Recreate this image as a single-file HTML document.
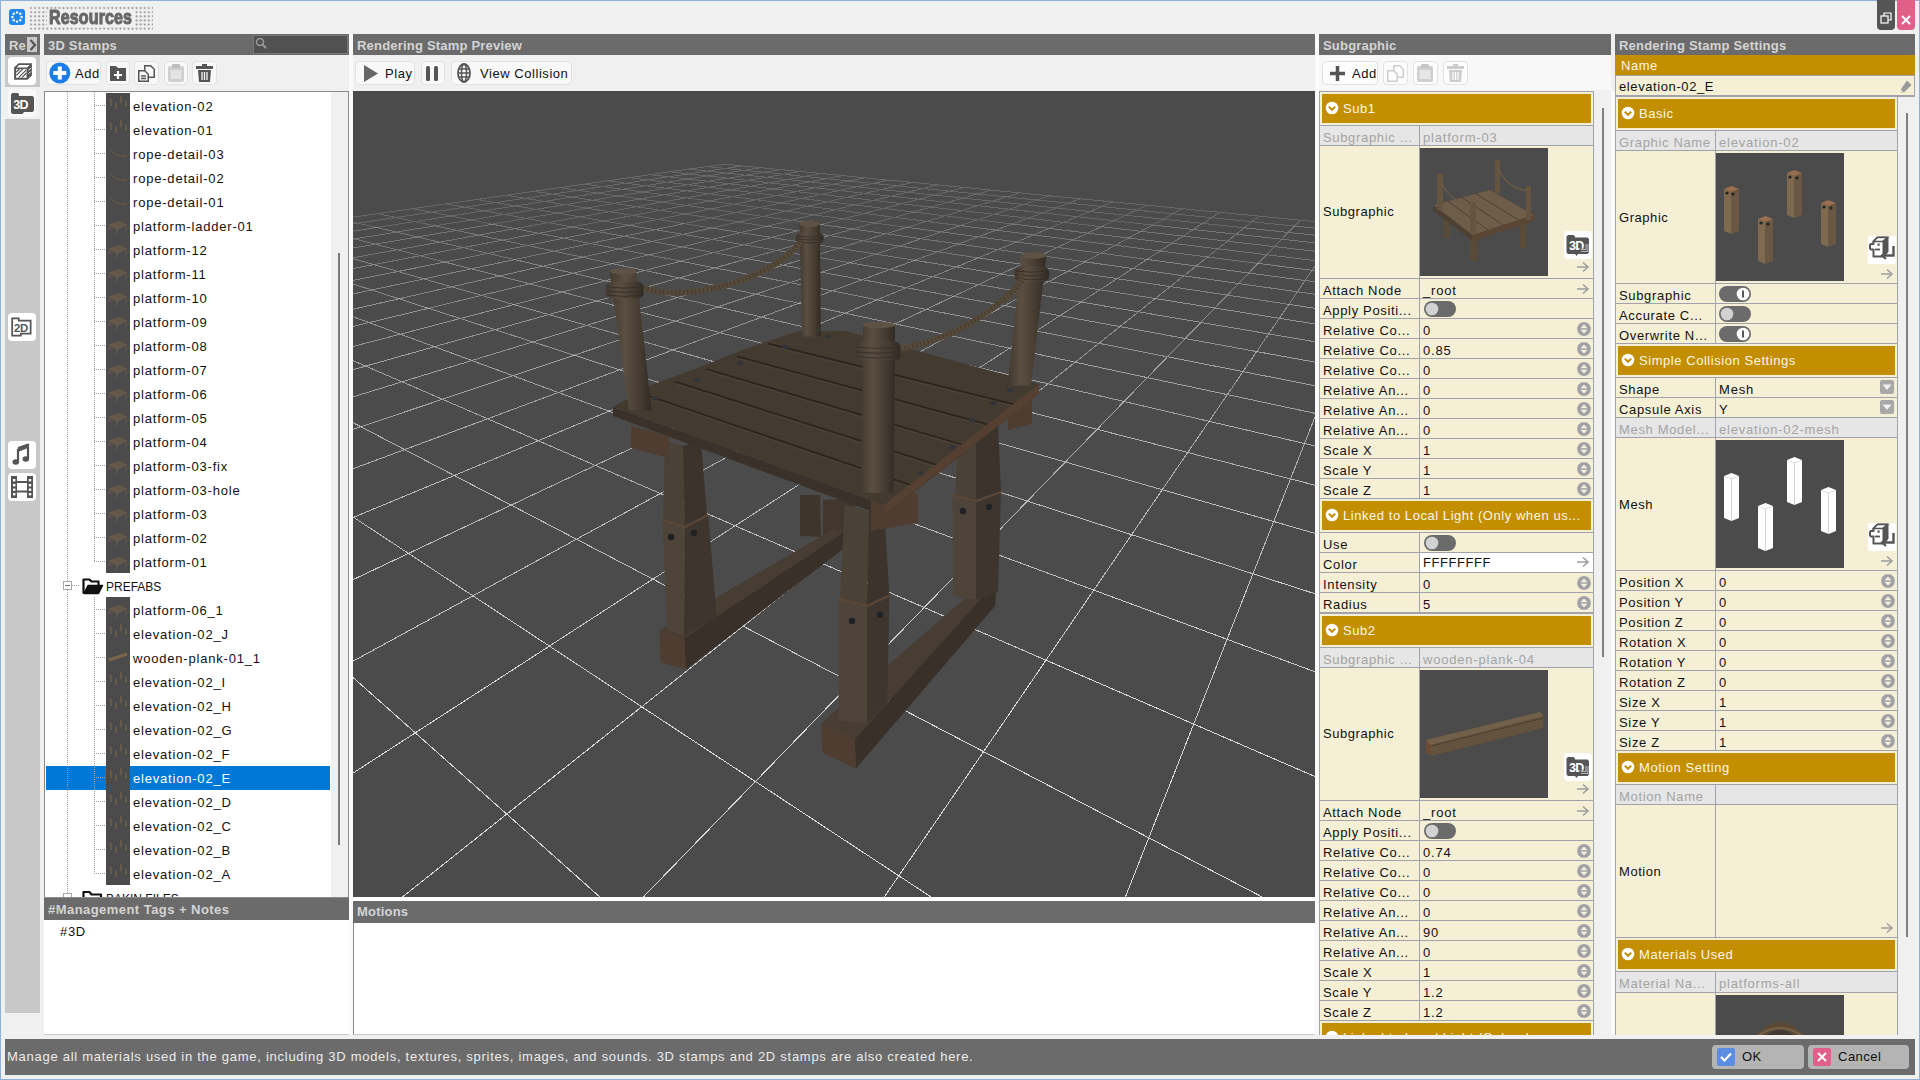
<!DOCTYPE html><html><head><meta charset="utf-8"><style>
html,body{margin:0;padding:0;width:1920px;height:1080px;overflow:hidden;}
body{position:relative;font-family:"Liberation Sans",sans-serif;}
div,svg{position:absolute;box-sizing:border-box;}
.a{position:absolute;}
.t{white-space:nowrap;}
</style></head><body>
<div style="left:0px;top:0px;width:1920px;height:1080px;background:#f0f0f0;"></div>
<div style="left:0px;top:0px;width:1920px;height:1px;background:#8fb0d8;"></div>
<div style="left:0px;top:0px;width:1px;height:1080px;background:#8fb0d8;"></div>
<div style="left:1919px;top:0px;width:1px;height:1080px;background:#8fb0d8;"></div>
<div style="left:0px;top:1079px;width:1920px;height:1px;background:#8fb0d8;"></div>
<svg class="a" style="left:9px;top:9px" width="16" height="16" viewBox="0 0 16 16"><rect x="0" y="0" width="16" height="16" rx="3" fill="#1e88f0"/><circle cx="12.6" cy="8.0" r="1.2" fill="#fff"/><circle cx="11.253986038169119" cy="11.251395833084683" r="1.2" fill="#fff"/><circle cx="8.003663102869373" cy="12.599998541486439" r="1.2" fill="#fff"/><circle cx="4.751196433827976" cy="11.256574179782788" r="1.2" fill="#fff"/><circle cx="3.400005834053319" cy="8.00732620341584" r="1.2" fill="#fff"/><circle cx="4.740839743715545" cy="4.753790760925007" r="1.2" fill="#fff"/><circle cx="7.9890107006835045" cy="3.4000131266164972" r="1.2" fill="#fff"/><circle cx="11.243612853438744" cy="4.7382557339658025" r="1.2" fill="#fff"/></svg>
<div class="a" style="left:29px;top:6px;width:124px;height:24px;background-image:radial-gradient(circle at 2px 2px,#a4a4a4 0.95px,transparent 1.2px);background-size:4.07px 4.15px;"></div>
<div class="a" style="left:47px;top:11px;width:88px;height:15px;background:#f0f0f0;"></div>
<div class="t" style="left:49px;top:6px;height:20px;line-height:20px;font-size:16px;color:#676767;font-weight:bold;letter-spacing:0.15px;transform:scale(1.0,1.22);transform-origin:0 0;-webkit-text-stroke:0.9px #676767;">Resources</div>
<div style="left:1877px;top:0px;width:18px;height:30px;background:#555;border-radius:0 0 4px 4px;"></div>
<svg class="a" style="left:1880px;top:12px" width="12" height="12"><rect x="1" y="4" width="7" height="7" fill="none" stroke="#fff" stroke-width="1.2"/><path d="M4 4V1h7v7H8" fill="none" stroke="#fff" stroke-width="1.2"/></svg>
<div style="left:1897px;top:0px;width:18px;height:30px;background:#e0608a;border-radius:0 0 4px 4px;"></div>
<svg class="a" style="left:1901px;top:15px" width="10" height="10"><path d="M1 1L9 9M9 1L1 9" stroke="#fff" stroke-width="2"/></svg>
<div style="left:349px;top:34px;width:4px;height:1001px;background:#fafafa;"></div>
<div style="left:1315px;top:34px;width:4px;height:1001px;background:#fafafa;"></div>
<div style="left:5px;top:34px;width:35px;height:21px;background:#6b6b6b;"></div>
<div class="t" style="left:9px;top:36px;height:20px;line-height:20px;font-size:13px;color:#d4d4d4;font-weight:bold;letter-spacing:0.2px;">Re</div>
<div style="left:27px;top:37px;width:10px;height:15px;background:#c8c8c8;"></div>
<svg class="a" style="left:28px;top:38px" width="9" height="14"><path d="M2.5 2L7 7L2.5 12" fill="none" stroke="#555" stroke-width="2.2"/></svg>
<div style="left:44px;top:34px;width:305px;height:21px;background:#6b6b6b;"></div>
<div class="t" style="left:48px;top:36px;height:20px;line-height:20px;font-size:13px;color:#d4d4d4;font-weight:bold;letter-spacing:0.2px;">3D Stamps</div>
<div style="left:253px;top:35px;width:95px;height:19px;background:#515151;border:1px solid #777;box-sizing:border-box;"></div>
<svg class="a" style="left:255px;top:37px" width="12" height="12"><circle cx="5" cy="5" r="3.5" fill="none" stroke="#9a9a9a" stroke-width="1.6"/><path d="M7.5 7.5L11 11" stroke="#9a9a9a" stroke-width="2"/></svg>
<div style="left:353px;top:34px;width:962px;height:21px;background:#6b6b6b;"></div>
<div class="t" style="left:357px;top:36px;height:20px;line-height:20px;font-size:13px;color:#d4d4d4;font-weight:bold;letter-spacing:0.2px;">Rendering Stamp Preview</div>
<div style="left:1319px;top:34px;width:292px;height:21px;background:#6b6b6b;"></div>
<div class="t" style="left:1323px;top:36px;height:20px;line-height:20px;font-size:13px;color:#d4d4d4;font-weight:bold;letter-spacing:0.2px;">Subgraphic</div>
<div style="left:1615px;top:34px;width:300px;height:21px;background:#6b6b6b;"></div>
<div class="t" style="left:1619px;top:36px;height:20px;line-height:20px;font-size:13px;color:#d4d4d4;font-weight:bold;letter-spacing:0.2px;">Rendering Stamp Settings</div>
<div style="left:5px;top:55px;width:35px;height:32px;background:#c8c8c8;"></div>
<div style="left:8px;top:57px;width:28px;height:28px;background:#fff;border-radius:4px;"></div>
<div style="left:8px;top:89px;width:28px;height:28px;background:#f8f8f8;border-radius:4px;"></div>
<div style="left:5px;top:119px;width:35px;height:894px;background:#c8c8c8;"></div>
<div style="left:8px;top:313px;width:28px;height:28px;background:#fff;border-radius:4px;"></div>
<div style="left:8px;top:441px;width:28px;height:28px;background:#fff;border-radius:4px;"></div>
<div style="left:8px;top:473px;width:28px;height:28px;background:#fff;border-radius:4px;"></div>
<div style="left:44px;top:91px;width:305px;height:807px;background:#fff;border:1px solid #8a8a8a;box-sizing:border-box;"></div>
<div style="left:331px;top:92px;width:17px;height:805px;background:#f0f0f0;"></div>
<div style="left:338px;top:253px;width:2px;height:592px;background:#7a7a7a;"></div>
<div style="left:5px;top:1039px;width:1910px;height:36px;background:#6b6b6b;"></div>
<div class="t" style="left:7px;top:1047px;height:20px;line-height:20px;font-size:13px;color:#ececec;font-weight:normal;letter-spacing:0.73px;">Manage all materials used in the game, including 3D models, textures, sprites, images, and sounds. 3D stamps and 2D stamps are also created here.</div>
<div style="left:1712px;top:1045px;width:92px;height:24px;background:#b4b4b4;border-radius:4px;"></div>
<div style="left:1717px;top:1048px;width:18px;height:18px;background:#5b8ee0;border-radius:2px;"></div>
<svg class="a" style="left:1719px;top:1051px" width="14" height="12"><path d="M2 6L5.5 9.5L12 2.5" fill="none" stroke="#fff" stroke-width="2.2"/></svg>
<div class="t" style="left:1742px;top:1047px;height:20px;line-height:20px;font-size:13px;color:#111;font-weight:normal;letter-spacing:0.5px;">OK</div>
<div style="left:1808px;top:1045px;width:101px;height:24px;background:#b4b4b4;border-radius:4px;"></div>
<div style="left:1813px;top:1048px;width:18px;height:18px;background:#e0608a;border-radius:2px;"></div>
<svg class="a" style="left:1816px;top:1051px" width="12" height="12"><path d="M2 2L10 10M10 2L2 10" stroke="#fff" stroke-width="2"/></svg>
<div class="t" style="left:1838px;top:1047px;height:20px;line-height:20px;font-size:13px;color:#111;font-weight:normal;letter-spacing:0.5px;">Cancel</div>
<svg class="a" style="left:353px;top:91px" width="962" height="806" viewBox="353 91 962 806"><rect x="353" y="91" width="962" height="806" fill="#4b4b4b"/><path shape-rendering="crispEdges" stroke="#d8d8d8" stroke-opacity="0.2" stroke-width="1.0" fill="none" d="M724.0 164.1L706.8 166.6M706.8 166.6L688.8 169.1M688.8 169.1L669.9 171.8M669.9 171.8L650.0 174.7M650.0 174.7L629.2 177.7M629.2 177.7L607.2 180.8M607.2 180.8L584.0 184.1M584.0 184.1L559.5 187.6M559.5 187.6L533.6 191.3M533.6 191.3L506.1 195.3M506.1 195.3L477.0 199.4M477.0 199.4L446.0 203.9M446.0 203.9L413.0 208.6M413.0 208.6L377.8 213.6M377.8 213.6L351.0 217.5M742.1 165.9L725.0 168.4M725.0 168.4L707.1 171.1M707.1 171.1L688.4 173.9M688.4 173.9L668.6 176.8M668.6 176.8L647.8 179.9M647.8 179.9L625.9 183.2M625.9 183.2L602.8 186.6M602.8 186.6L578.3 190.3M578.3 190.3L552.4 194.2M552.4 194.2L524.9 198.3M524.9 198.3L495.7 202.6M495.7 202.6L464.6 207.2M464.6 207.2L431.4 212.2M431.4 212.2L395.9 217.5M395.9 217.5L357.9 223.2M357.9 223.2L351.0 224.2M760.8 167.7L743.9 170.3M743.9 170.3L726.2 173.1M726.2 173.1L707.5 176.0M707.5 176.0L687.9 179.0M687.9 179.0L667.2 182.3M667.2 182.3L645.4 185.7M645.4 185.7L622.4 189.3M622.4 189.3L597.9 193.1M597.9 193.1L572.0 197.1M572.0 197.1L544.6 201.4M544.6 201.4L515.3 205.9M515.3 205.9L484.1 210.8M484.1 210.8L450.7 216.0M450.7 216.0L415.0 221.6M415.0 221.6L376.7 227.5M780.2 169.6L763.5 172.3M763.5 172.3L745.9 175.2M745.9 175.2L727.4 178.2M727.4 178.2L708.0 181.3M708.0 181.3L687.4 184.7M687.4 184.7L665.7 188.2M665.7 188.2L642.8 192.0M642.8 192.0L618.4 196.0M618.4 196.0L592.6 200.2M592.6 200.2L565.1 204.6M565.1 204.6L535.8 209.4M535.8 209.4L504.5 214.5M504.5 214.5L471.1 220.0M471.1 220.0L435.1 225.8M800.3 171.5L783.8 174.3M783.8 174.3L766.4 177.3M766.4 177.3L748.1 180.4M748.1 180.4L728.8 183.8M728.8 183.8L708.4 187.2M708.4 187.2L686.9 190.9M686.9 190.9L664.0 194.8M664.0 194.8L639.8 199.0M639.8 199.0L614.1 203.4M614.1 203.4L586.6 208.1M586.6 208.1L557.3 213.1M557.3 213.1L526.0 218.4M526.0 218.4L492.4 224.2M821.1 173.5L804.8 176.5M804.8 176.5L787.7 179.6M787.7 179.6L769.6 182.8M769.6 182.8L750.5 186.2M750.5 186.2L730.3 189.9M730.3 189.9L708.9 193.7M708.9 193.7L686.3 197.8M686.3 197.8L662.2 202.1M662.2 202.1L636.5 206.7M636.5 206.7L609.2 211.7M609.2 211.7L580.0 216.9M580.0 216.9L548.6 222.6M548.6 222.6L515.0 228.6M842.7 175.6L826.7 178.7M826.7 178.7L809.8 181.9M809.8 181.9L791.9 185.3M791.9 185.3L773.1 188.9M773.1 188.9L753.1 192.6M753.1 192.6L732.0 196.6M732.0 196.6L709.5 200.9M709.5 200.9L685.6 205.4M685.6 205.4L660.1 210.3M660.1 210.3L632.9 215.4M632.9 215.4L603.7 221.0M603.7 221.0L572.4 226.9M865.1 177.8L849.4 181.0M849.4 181.0L832.7 184.3M832.7 184.3L815.2 187.8M815.2 187.8L796.6 191.6M796.6 191.6L776.9 195.5M776.9 195.5L756.0 199.7M756.0 199.7L733.8 204.2M733.8 204.2L710.1 208.9M710.1 208.9L684.9 214.0M684.9 214.0L657.8 219.4M657.8 219.4L628.8 225.2M888.4 180.1L873.0 183.4M873.0 183.4L856.7 186.8M856.7 186.8L839.4 190.5M839.4 190.5L821.2 194.4M821.2 194.4L801.8 198.5M801.8 198.5L781.2 202.9M781.2 202.9L759.3 207.6M759.3 207.6L735.9 212.5M735.9 212.5L710.8 217.9M710.8 217.9L684.0 223.6M912.6 182.4L897.5 185.9M897.5 185.9L881.6 189.5M881.6 189.5L864.7 193.3M864.7 193.3L846.8 197.3M846.8 197.3L827.8 201.7M827.8 201.7L807.6 206.2M807.6 206.2L786.0 211.1M786.0 211.1L762.9 216.4M762.9 216.4L738.2 222.0M738.2 222.0L711.6 228.0M937.8 184.9L923.1 188.5M923.1 188.5L907.5 192.2M907.5 192.2L891.1 196.2M891.1 196.2L873.6 200.4M873.6 200.4L855.0 204.9M855.0 204.9L835.2 209.7M835.2 209.7L814.0 214.9M814.0 214.9L791.3 220.4M791.3 220.4L767.0 226.3M963.9 187.4L949.7 191.2M949.7 191.2L934.6 195.1M934.6 195.1L918.6 199.2M918.6 199.2L901.6 203.7M901.6 203.7L883.5 208.4M883.5 208.4L864.1 213.4M864.1 213.4L843.4 218.8M843.4 218.8L821.2 224.6M991.2 190.1L977.5 194.0M977.5 194.0L962.9 198.1M962.9 198.1L947.5 202.4M947.5 202.4L931.0 207.1M931.0 207.1L913.4 212.0M913.4 212.0L894.6 217.3M894.6 217.3L874.4 223.0M874.4 223.0L852.8 229.0M1019.7 192.9L1006.5 196.9M1006.5 196.9L992.5 201.2M992.5 201.2L977.6 205.7M977.6 205.7L961.8 210.6M961.8 210.6L944.8 215.8M944.8 215.8L926.6 221.4M926.6 221.4L907.1 227.3M1049.4 195.8L1036.8 200.0M1036.8 200.0L1023.5 204.5M1023.5 204.5L1009.3 209.2M1009.3 209.2L994.1 214.3M994.1 214.3L977.8 219.8M977.8 219.8L960.3 225.6M1080.4 198.8L1068.5 203.2M1068.5 203.2L1055.9 207.9M1055.9 207.9L1042.4 212.9M1042.4 212.9L1028.0 218.2M1028.0 218.2L1012.5 224.0M1112.8 201.9L1101.8 206.5M1101.8 206.5L1089.9 211.5M1089.9 211.5L1077.3 216.7M1077.3 216.7L1063.7 222.3M1063.7 222.3L1049.1 228.4M1146.8 205.2L1136.6 210.1M1136.6 210.1L1125.6 215.2M1125.6 215.2L1113.9 220.8M1113.9 220.8L1101.3 226.7M1182.4 208.7L1173.1 213.8M1173.1 213.8L1163.1 219.2M1163.1 219.2L1152.5 225.0M1219.7 212.3L1211.5 217.7M1211.5 217.7L1202.7 223.4M1258.9 216.1L1251.8 221.7M1251.8 221.7L1244.3 227.8M1300.1 220.2L1294.4 226.1M724.0 164.1L742.1 165.9M742.1 165.9L760.8 167.7M760.8 167.7L780.2 169.6M780.2 169.6L800.3 171.5M800.3 171.5L821.1 173.5M821.1 173.5L842.7 175.6M842.7 175.6L865.1 177.8M865.1 177.8L888.4 180.1M888.4 180.1L912.6 182.4M912.6 182.4L937.8 184.9M937.8 184.9L963.9 187.4M963.9 187.4L991.2 190.1M991.2 190.1L1019.7 192.9M1019.7 192.9L1049.4 195.8M1049.4 195.8L1080.4 198.8M1080.4 198.8L1112.8 201.9M1112.8 201.9L1146.8 205.2M1146.8 205.2L1182.4 208.7M1182.4 208.7L1219.7 212.3M1219.7 212.3L1258.9 216.1M1258.9 216.1L1300.1 220.2M1300.1 220.2L1317.0 221.8M706.8 166.6L725.0 168.4M725.0 168.4L743.9 170.3M743.9 170.3L763.5 172.3M763.5 172.3L783.8 174.3M783.8 174.3L804.8 176.5M804.8 176.5L826.7 178.7M826.7 178.7L849.4 181.0M849.4 181.0L873.0 183.4M873.0 183.4L897.5 185.9M897.5 185.9L923.1 188.5M923.1 188.5L949.7 191.2M949.7 191.2L977.5 194.0M977.5 194.0L1006.5 196.9M1006.5 196.9L1036.8 200.0M1036.8 200.0L1068.5 203.2M1068.5 203.2L1101.8 206.5M1101.8 206.5L1136.6 210.1M1136.6 210.1L1173.1 213.8M1173.1 213.8L1211.5 217.7M1211.5 217.7L1251.8 221.7M1251.8 221.7L1294.4 226.1M688.8 169.1L707.1 171.1M707.1 171.1L726.2 173.1M726.2 173.1L745.9 175.2M745.9 175.2L766.4 177.3M766.4 177.3L787.7 179.6M787.7 179.6L809.8 181.9M809.8 181.9L832.7 184.3M832.7 184.3L856.7 186.8M856.7 186.8L881.6 189.5M881.6 189.5L907.5 192.2M907.5 192.2L934.6 195.1M934.6 195.1L962.9 198.1M962.9 198.1L992.5 201.2M992.5 201.2L1023.5 204.5M1023.5 204.5L1055.9 207.9M1055.9 207.9L1089.9 211.5M1089.9 211.5L1125.6 215.2M1125.6 215.2L1163.1 219.2M1163.1 219.2L1202.7 223.4M1202.7 223.4L1244.3 227.8M669.9 171.8L688.4 173.9M688.4 173.9L707.5 176.0M707.5 176.0L727.4 178.2M727.4 178.2L748.1 180.4M748.1 180.4L769.6 182.8M769.6 182.8L791.9 185.3M791.9 185.3L815.2 187.8M815.2 187.8L839.4 190.5M839.4 190.5L864.7 193.3M864.7 193.3L891.1 196.2M891.1 196.2L918.6 199.2M918.6 199.2L947.5 202.4M947.5 202.4L977.6 205.7M977.6 205.7L1009.3 209.2M1009.3 209.2L1042.4 212.9M1042.4 212.9L1077.3 216.7M1077.3 216.7L1113.9 220.8M1113.9 220.8L1152.5 225.0M650.0 174.7L668.6 176.8M668.6 176.8L687.9 179.0M687.9 179.0L708.0 181.3M708.0 181.3L728.8 183.8M728.8 183.8L750.5 186.2M750.5 186.2L773.1 188.9M773.1 188.9L796.6 191.6M796.6 191.6L821.2 194.4M821.2 194.4L846.8 197.3M846.8 197.3L873.6 200.4M873.6 200.4L901.6 203.7M901.6 203.7L931.0 207.1M931.0 207.1L961.8 210.6M961.8 210.6L994.1 214.3M994.1 214.3L1028.0 218.2M1028.0 218.2L1063.7 222.3M1063.7 222.3L1101.3 226.7M629.2 177.7L647.8 179.9M647.8 179.9L667.2 182.3M667.2 182.3L687.4 184.7M687.4 184.7L708.4 187.2M708.4 187.2L730.3 189.9M730.3 189.9L753.1 192.6M753.1 192.6L776.9 195.5M776.9 195.5L801.8 198.5M801.8 198.5L827.8 201.7M827.8 201.7L855.0 204.9M855.0 204.9L883.5 208.4M883.5 208.4L913.4 212.0M913.4 212.0L944.8 215.8M944.8 215.8L977.8 219.8M977.8 219.8L1012.5 224.0M607.2 180.8L625.9 183.2M625.9 183.2L645.4 185.7M645.4 185.7L665.7 188.2M665.7 188.2L686.9 190.9M686.9 190.9L708.9 193.7M708.9 193.7L732.0 196.6M732.0 196.6L756.0 199.7M756.0 199.7L781.2 202.9M781.2 202.9L807.6 206.2M807.6 206.2L835.2 209.7M835.2 209.7L864.1 213.4M864.1 213.4L894.6 217.3M894.6 217.3L926.6 221.4M926.6 221.4L960.3 225.6M584.0 184.1L602.8 186.6M602.8 186.6L622.4 189.3M622.4 189.3L642.8 192.0M642.8 192.0L664.0 194.8M664.0 194.8L686.3 197.8M686.3 197.8L709.5 200.9M709.5 200.9L733.8 204.2M733.8 204.2L759.3 207.6M759.3 207.6L786.0 211.1M786.0 211.1L814.0 214.9M814.0 214.9L843.4 218.8M843.4 218.8L874.4 223.0M874.4 223.0L907.1 227.3M559.5 187.6L578.3 190.3M578.3 190.3L597.9 193.1M597.9 193.1L618.4 196.0M618.4 196.0L639.8 199.0M639.8 199.0L662.2 202.1M662.2 202.1L685.6 205.4M685.6 205.4L710.1 208.9M710.1 208.9L735.9 212.5M735.9 212.5L762.9 216.4M762.9 216.4L791.3 220.4M791.3 220.4L821.2 224.6M533.6 191.3L552.4 194.2M552.4 194.2L572.0 197.1M572.0 197.1L592.6 200.2M592.6 200.2L614.1 203.4M614.1 203.4L636.5 206.7M636.5 206.7L660.1 210.3M660.1 210.3L684.9 214.0M684.9 214.0L710.8 217.9M710.8 217.9L738.2 222.0M738.2 222.0L767.0 226.3M506.1 195.3L524.9 198.3M524.9 198.3L544.6 201.4M544.6 201.4L565.1 204.6M565.1 204.6L586.6 208.1M586.6 208.1L609.2 211.7M609.2 211.7L632.9 215.4M632.9 215.4L657.8 219.4M657.8 219.4L684.0 223.6M684.0 223.6L711.6 228.0M477.0 199.4L495.7 202.6M495.7 202.6L515.3 205.9M515.3 205.9L535.8 209.4M535.8 209.4L557.3 213.1M557.3 213.1L580.0 216.9M580.0 216.9L603.7 221.0M603.7 221.0L628.8 225.2M446.0 203.9L464.6 207.2M464.6 207.2L484.1 210.8M484.1 210.8L504.5 214.5M504.5 214.5L526.0 218.4M526.0 218.4L548.6 222.6M548.6 222.6L572.4 226.9M413.0 208.6L431.4 212.2M431.4 212.2L450.7 216.0M450.7 216.0L471.1 220.0M471.1 220.0L492.4 224.2M377.8 213.6L395.9 217.5M395.9 217.5L415.0 221.6M415.0 221.6L435.1 225.8M351.0 221.6L357.9 223.2M357.9 223.2L376.7 227.5"/><path shape-rendering="crispEdges" stroke="#d8d8d8" stroke-opacity="0.3" stroke-width="1.0" fill="none" d="M376.7 227.5L351.0 231.5M435.1 225.8L396.5 232.1M396.5 232.1L354.8 238.9M354.8 238.9L351.0 239.6M492.4 224.2L456.3 230.4M456.3 230.4L417.4 237.0M417.4 237.0L375.4 244.2M375.4 244.2L351.0 248.4M515.0 228.6L478.7 235.1M478.7 235.1L439.6 242.2M439.6 242.2L397.2 249.8M397.2 249.8L351.0 258.1M572.4 226.9L538.8 233.3M538.8 233.3L502.4 240.2M502.4 240.2L463.1 247.6M463.1 247.6L420.3 255.7M420.3 255.7L373.7 264.6M628.8 225.2L597.6 231.5M597.6 231.5L563.9 238.2M563.9 238.2L527.5 245.5M527.5 245.5L488.0 253.4M488.0 253.4L445.0 262.1M684.0 223.6L655.2 229.7M655.2 229.7L624.1 236.3M624.1 236.3L590.5 243.5M590.5 243.5L554.1 251.2M554.1 251.2L514.5 259.6M711.6 228.0L683.1 234.4M683.1 234.4L652.2 241.4M652.2 241.4L618.8 249.0M618.8 249.0L582.4 257.2M767.0 226.3L740.8 232.6M740.8 232.6L712.6 239.4M712.6 239.4L682.0 246.9M682.0 246.9L648.8 254.9M648.8 254.9L612.6 263.7M821.2 224.6L797.4 230.8M797.4 230.8L771.6 237.5M771.6 237.5L743.8 244.8M743.8 244.8L713.6 252.6M713.6 252.6L680.7 261.2M852.8 229.0L829.5 235.6M829.5 235.6L804.2 242.7M804.2 242.7L776.9 250.4M776.9 250.4L747.2 258.7M907.1 227.3L886.1 233.8M886.1 233.8L863.4 240.7M863.4 240.7L838.8 248.2M838.8 248.2L812.2 256.4M960.3 225.6L941.6 231.9M941.6 231.9L921.3 238.7M921.3 238.7L899.4 246.1M899.4 246.1L875.6 254.1M875.6 254.1L849.7 262.7M1012.5 224.0L995.9 230.1M995.9 230.1L978.0 236.8M978.0 236.8L958.6 244.0M958.6 244.0L937.6 251.8M937.6 251.8L914.7 260.3M1049.1 228.4L1033.5 234.9M1033.5 234.9L1016.5 242.0M1016.5 242.0L998.2 249.6M998.2 249.6L978.2 257.9M1101.3 226.7L1087.8 233.1M1087.8 233.1L1073.2 240.0M1073.2 240.0L1057.4 247.4M1057.4 247.4L1040.2 255.5M1040.2 255.5L1021.5 264.3M1152.5 225.0L1141.0 231.3M1141.0 231.3L1128.7 238.0M1128.7 238.0L1115.3 245.3M1115.3 245.3L1100.8 253.2M1100.8 253.2L1085.0 261.8M1202.7 223.4L1193.2 229.5M1193.2 229.5L1183.0 236.1M1183.0 236.1L1171.9 243.2M1171.9 243.2L1160.0 251.0M1160.0 251.0L1147.0 259.4M1244.3 227.8L1236.1 234.2M1236.1 234.2L1227.4 241.2M1227.4 241.2L1217.8 248.8M1217.8 248.8L1207.5 257.0M1294.4 226.1L1288.2 232.4M1288.2 232.4L1281.6 239.2M1281.6 239.2L1274.4 246.6M1274.4 246.6L1266.6 254.7M1266.6 254.7L1258.1 263.4M1294.4 226.1L1317.0 228.3M1244.3 227.8L1288.2 232.4M1288.2 232.4L1317.0 235.4M1152.5 225.0L1193.2 229.5M1193.2 229.5L1236.1 234.2M1236.1 234.2L1281.6 239.2M1281.6 239.2L1317.0 243.1M1101.3 226.7L1141.0 231.3M1141.0 231.3L1183.0 236.1M1183.0 236.1L1227.4 241.2M1227.4 241.2L1274.4 246.6M1274.4 246.6L1317.0 251.5M1012.5 224.0L1049.1 228.4M1049.1 228.4L1087.8 233.1M1087.8 233.1L1128.7 238.0M1128.7 238.0L1171.9 243.2M1171.9 243.2L1217.8 248.8M1217.8 248.8L1266.6 254.7M1266.6 254.7L1317.0 260.8M960.3 225.6L995.9 230.1M995.9 230.1L1033.5 234.9M1033.5 234.9L1073.2 240.0M1073.2 240.0L1115.3 245.3M1115.3 245.3L1160.0 251.0M1160.0 251.0L1207.5 257.0M1207.5 257.0L1258.1 263.4M907.1 227.3L941.6 231.9M941.6 231.9L978.0 236.8M978.0 236.8L1016.5 242.0M1016.5 242.0L1057.4 247.4M1057.4 247.4L1100.8 253.2M1100.8 253.2L1147.0 259.4M821.2 224.6L852.8 229.0M852.8 229.0L886.1 233.8M886.1 233.8L921.3 238.7M921.3 238.7L958.6 244.0M958.6 244.0L998.2 249.6M998.2 249.6L1040.2 255.5M1040.2 255.5L1085.0 261.8M767.0 226.3L797.4 230.8M797.4 230.8L829.5 235.6M829.5 235.6L863.4 240.7M863.4 240.7L899.4 246.1M899.4 246.1L937.6 251.8M937.6 251.8L978.2 257.9M711.6 228.0L740.8 232.6M740.8 232.6L771.6 237.5M771.6 237.5L804.2 242.7M804.2 242.7L838.8 248.2M838.8 248.2L875.6 254.1M875.6 254.1L914.7 260.3M628.8 225.2L655.2 229.7M655.2 229.7L683.1 234.4M683.1 234.4L712.6 239.4M712.6 239.4L743.8 244.8M743.8 244.8L776.9 250.4M776.9 250.4L812.2 256.4M812.2 256.4L849.7 262.7M572.4 226.9L597.6 231.5M597.6 231.5L624.1 236.3M624.1 236.3L652.2 241.4M652.2 241.4L682.0 246.9M682.0 246.9L713.6 252.6M713.6 252.6L747.2 258.7M492.4 224.2L515.0 228.6M515.0 228.6L538.8 233.3M538.8 233.3L563.9 238.2M563.9 238.2L590.5 243.5M590.5 243.5L618.8 249.0M618.8 249.0L648.8 254.9M648.8 254.9L680.7 261.2M435.1 225.8L456.3 230.4M456.3 230.4L478.7 235.1M478.7 235.1L502.4 240.2M502.4 240.2L527.5 245.5M527.5 245.5L554.1 251.2M554.1 251.2L582.4 257.2M582.4 257.2L612.6 263.7M376.7 227.5L396.5 232.1M396.5 232.1L417.4 237.0M417.4 237.0L439.6 242.2M439.6 242.2L463.1 247.6M463.1 247.6L488.0 253.4M488.0 253.4L514.5 259.6M351.0 238.0L354.8 238.9M354.8 238.9L375.4 244.2M375.4 244.2L397.2 249.8M397.2 249.8L420.3 255.7M420.3 255.7L445.0 262.1M351.0 258.1L351.0 258.1"/><path shape-rendering="crispEdges" stroke="#d8d8d8" stroke-opacity="0.4" stroke-width="1.0" fill="none" d="M351.0 258.1L351.0 258.1M373.7 264.6L351.0 268.9M445.0 262.1L398.0 271.5M398.0 271.5L351.0 280.9M514.5 259.6L471.3 268.8M471.3 268.8L423.9 278.9M423.9 278.9L371.7 290.0M371.7 290.0L351.0 294.4M582.4 257.2L542.8 266.2M542.8 266.2L499.4 276.0M499.4 276.0L451.7 286.8M451.7 286.8L399.0 298.8M612.6 263.7L573.0 273.2M573.0 273.2L529.6 283.8M529.6 283.8L481.6 295.4M481.6 295.4L428.4 308.3M680.7 261.2L644.8 270.5M644.8 270.5L605.4 280.8M605.4 280.8L562.0 292.1M562.0 292.1L513.9 304.6M747.2 258.7L714.8 267.9M714.8 267.9L679.3 277.9M679.3 277.9L640.2 288.9M640.2 288.9L596.9 301.0M812.2 256.4L783.1 265.3M783.1 265.3L751.2 275.0M751.2 275.0L716.2 285.7M716.2 285.7L677.5 297.6M849.7 262.7L821.4 272.2M821.4 272.2L790.2 282.7M790.2 282.7L755.9 294.2M755.9 294.2L717.9 306.9M914.7 260.3L889.7 269.5M889.7 269.5L862.3 279.7M862.3 279.7L832.2 290.9M832.2 290.9L798.8 303.3M978.2 257.9L956.4 266.9M956.4 266.9L932.6 276.8M932.6 276.8L906.3 287.7M906.3 287.7L877.3 299.8M1021.5 264.3L1001.0 274.0M1001.0 274.0L978.5 284.6M978.5 284.6L953.6 296.3M1085.0 261.8L1067.7 271.3M1067.7 271.3L1048.8 281.6M1048.8 281.6L1027.8 293.0M1027.8 293.0L1004.7 305.6M1147.0 259.4L1132.8 268.6M1132.8 268.6L1117.2 278.7M1117.2 278.7L1100.0 289.8M1100.0 289.8L1081.0 302.0M1207.5 257.0L1196.2 266.0M1196.2 266.0L1183.8 275.8M1183.8 275.8L1170.2 286.6M1170.2 286.6L1155.2 298.5M1258.1 263.4L1248.8 273.0M1248.8 273.0L1238.6 283.5M1238.6 283.5L1227.3 295.1M1227.3 295.1L1214.8 308.0M1317.0 263.2L1312.1 270.3M1312.1 270.3L1305.1 280.5M1305.1 280.5L1297.4 291.8M1297.4 291.8L1288.9 304.4M1258.1 263.4L1312.1 270.3M1312.1 270.3L1317.0 270.9M1147.0 259.4L1196.2 266.0M1196.2 266.0L1248.8 273.0M1248.8 273.0L1305.1 280.5M1305.1 280.5L1317.0 282.1M1085.0 261.8L1132.8 268.6M1132.8 268.6L1183.8 275.8M1183.8 275.8L1238.6 283.5M1238.6 283.5L1297.4 291.8M1297.4 291.8L1317.0 294.6M978.2 257.9L1021.5 264.3M1021.5 264.3L1067.7 271.3M1067.7 271.3L1117.2 278.7M1117.2 278.7L1170.2 286.6M1170.2 286.6L1227.3 295.1M1227.3 295.1L1288.9 304.4M914.7 260.3L956.4 266.9M956.4 266.9L1001.0 274.0M1001.0 274.0L1048.8 281.6M1048.8 281.6L1100.0 289.8M1100.0 289.8L1155.2 298.5M849.7 262.7L889.7 269.5M889.7 269.5L932.6 276.8M932.6 276.8L978.5 284.6M978.5 284.6L1027.8 293.0M1027.8 293.0L1081.0 302.0M747.2 258.7L783.1 265.3M783.1 265.3L821.4 272.2M821.4 272.2L862.3 279.7M862.3 279.7L906.3 287.7M906.3 287.7L953.6 296.3M953.6 296.3L1004.7 305.6M680.7 261.2L714.8 267.9M714.8 267.9L751.2 275.0M751.2 275.0L790.2 282.7M790.2 282.7L832.2 290.9M832.2 290.9L877.3 299.8M612.6 263.7L644.8 270.5M644.8 270.5L679.3 277.9M679.3 277.9L716.2 285.7M716.2 285.7L755.9 294.2M755.9 294.2L798.8 303.3M514.5 259.6L542.8 266.2M542.8 266.2L573.0 273.2M573.0 273.2L605.4 280.8M605.4 280.8L640.2 288.9M640.2 288.9L677.5 297.6M677.5 297.6L717.9 306.9M445.0 262.1L471.3 268.8M471.3 268.8L499.4 276.0M499.4 276.0L529.6 283.8M529.6 283.8L562.0 292.1M562.0 292.1L596.9 301.0M351.0 258.1L373.7 264.6M373.7 264.6L398.0 271.5M398.0 271.5L423.9 278.9M423.9 278.9L451.7 286.8M451.7 286.8L481.6 295.4M481.6 295.4L513.9 304.6M351.0 283.3L371.7 290.0M371.7 290.0L399.0 298.8"/><path shape-rendering="crispEdges" stroke="#d8d8d8" stroke-opacity="0.5" stroke-width="1.0" fill="none" d="M399.0 298.8L351.0 309.7M428.4 308.3L369.1 322.6M369.1 322.6L351.0 327.0M513.9 304.6L460.3 318.5M460.3 318.5L400.3 334.2M400.3 334.2L351.0 347.0M596.9 301.0L548.8 314.6M548.8 314.6L495.0 329.7M495.0 329.7L434.4 346.7M677.5 297.6L634.6 310.7M634.6 310.7L586.7 325.4M586.7 325.4L532.8 341.9M532.8 341.9L471.8 360.5M717.9 306.9L675.5 321.2M675.5 321.2L627.9 337.1M627.9 337.1L574.1 355.2M798.8 303.3L761.6 317.1M761.6 317.1L719.9 332.6M719.9 332.6L672.9 350.0M877.3 299.8L845.1 313.2M845.1 313.2L809.0 328.2M809.0 328.2L768.4 345.0M953.6 296.3L926.1 309.4M926.1 309.4L895.3 323.9M895.3 323.9L860.7 340.2M860.7 340.2L821.6 358.6M1004.7 305.6L978.9 319.7M978.9 319.7L949.9 335.5M949.9 335.5L917.2 353.4M1081.0 302.0L1059.9 315.7M1059.9 315.7L1036.3 331.0M1036.3 331.0L1009.6 348.2M1155.2 298.5L1138.5 311.8M1138.5 311.8L1119.9 326.6M1119.9 326.6L1098.9 343.3M1098.9 343.3L1075.2 362.2M1214.8 308.0L1200.9 322.4M1200.9 322.4L1185.2 338.5M1185.2 338.5L1167.5 356.8M1288.9 304.4L1279.4 318.3M1279.4 318.3L1268.7 333.9M1268.7 333.9L1256.7 351.6M1288.9 304.4L1317.0 308.6M1155.2 298.5L1214.8 308.0M1214.8 308.0L1279.4 318.3M1279.4 318.3L1317.0 324.3M1081.0 302.0L1138.5 311.8M1138.5 311.8L1200.9 322.4M1200.9 322.4L1268.7 333.9M1268.7 333.9L1317.0 342.1M1004.7 305.6L1059.9 315.7M1059.9 315.7L1119.9 326.6M1119.9 326.6L1185.2 338.5M1185.2 338.5L1256.7 351.6M877.3 299.8L926.1 309.4M926.1 309.4L978.9 319.7M978.9 319.7L1036.3 331.0M1036.3 331.0L1098.9 343.3M1098.9 343.3L1167.5 356.8M798.8 303.3L845.1 313.2M845.1 313.2L895.3 323.9M895.3 323.9L949.9 335.5M949.9 335.5L1009.6 348.2M717.9 306.9L761.6 317.1M761.6 317.1L809.0 328.2M809.0 328.2L860.7 340.2M860.7 340.2L917.2 353.4M596.9 301.0L634.6 310.7M634.6 310.7L675.5 321.2M675.5 321.2L719.9 332.6M719.9 332.6L768.4 345.0M768.4 345.0L821.6 358.6M513.9 304.6L548.8 314.6M548.8 314.6L586.7 325.4M586.7 325.4L627.9 337.1M627.9 337.1L672.9 350.0M399.0 298.8L428.4 308.3M428.4 308.3L460.3 318.5M460.3 318.5L495.0 329.7M495.0 329.7L532.8 341.9M532.8 341.9L574.1 355.2M351.0 316.0L369.1 322.6M369.1 322.6L400.3 334.2M400.3 334.2L434.4 346.7"/><path shape-rendering="crispEdges" stroke="#d8d8d8" stroke-opacity="0.6" stroke-width="1.0" fill="none" d="M434.4 346.7L365.7 366.1M365.7 366.1L351.0 370.2M471.8 360.5L402.1 381.8M402.1 381.8L351.0 397.5M574.1 355.2L512.9 375.7M512.9 375.7L442.5 399.3M442.5 399.3L360.8 426.7M672.9 350.0L619.6 369.8M619.6 369.8L558.4 392.5M558.4 392.5L487.6 418.8M768.4 345.0L722.4 364.1M722.4 364.1L669.8 386.0M669.8 386.0L609.1 411.2M821.6 358.6L776.9 379.7M776.9 379.7L725.5 403.9M917.2 353.4L880.1 373.6M880.1 373.6L837.4 396.9M837.4 396.9L787.8 424.0M1009.6 348.2L979.4 367.8M979.4 367.8L944.8 390.2M944.8 390.2L904.7 416.2M1075.2 362.2L1048.0 383.8M1048.0 383.8L1016.7 408.7M1167.5 356.8L1147.3 377.6M1147.3 377.6L1124.1 401.5M1256.7 351.6L1243.0 371.6M1243.0 371.6L1227.3 394.6M1227.3 394.6L1209.1 421.3M1317.0 411.7L1316.3 413.6M1256.7 351.6L1317.0 362.5M1167.5 356.8L1243.0 371.6M1243.0 371.6L1317.0 386.1M1009.6 348.2L1075.2 362.2M1075.2 362.2L1147.3 377.6M1147.3 377.6L1227.3 394.6M1227.3 394.6L1316.3 413.6M917.2 353.4L979.4 367.8M979.4 367.8L1048.0 383.8M1048.0 383.8L1124.1 401.5M1124.1 401.5L1209.1 421.3M821.6 358.6L880.1 373.6M880.1 373.6L944.8 390.2M944.8 390.2L1016.7 408.7M672.9 350.0L722.4 364.1M722.4 364.1L776.9 379.7M776.9 379.7L837.4 396.9M837.4 396.9L904.7 416.2M574.1 355.2L619.6 369.8M619.6 369.8L669.8 386.0M669.8 386.0L725.5 403.9M434.4 346.7L471.8 360.5M471.8 360.5L512.9 375.7M512.9 375.7L558.4 392.5M558.4 392.5L609.1 411.2M351.0 359.7L365.7 366.1M365.7 366.1L402.1 381.8M402.1 381.8L442.5 399.3M442.5 399.3L487.6 418.8"/><path shape-rendering="crispEdges" stroke="#d8d8d8" stroke-opacity="0.7" stroke-width="1.0" fill="none" d="M360.8 426.7L351.0 430.0M487.6 418.8L404.6 449.6M404.6 449.6L351.0 469.5M609.1 411.2L538.2 440.7M538.2 440.7L454.3 475.5M725.5 403.9L665.8 432.1M665.8 432.1L595.3 465.4M595.3 465.4L511.1 505.1M787.8 424.0L729.6 455.7M729.6 455.7L660.4 493.5M904.7 416.2L857.8 446.5M857.8 446.5L802.2 482.5M1016.7 408.7L980.2 437.7M980.2 437.7L937.0 472.0M1124.1 401.5L1097.1 429.3M1097.1 429.3L1065.4 462.0M1065.4 462.0L1027.4 501.1M1209.1 421.3L1187.7 452.5M1187.7 452.5L1162.3 489.7M1316.3 413.6L1304.5 443.5M1304.5 443.5L1290.5 478.9M1316.3 413.6L1317.0 413.7M1209.1 421.3L1304.5 443.5M1304.5 443.5L1317.0 446.4M1016.7 408.7L1097.1 429.3M1097.1 429.3L1187.7 452.5M1187.7 452.5L1290.5 478.9M904.7 416.2L980.2 437.7M980.2 437.7L1065.4 462.0M1065.4 462.0L1162.3 489.7M725.5 403.9L787.8 424.0M787.8 424.0L857.8 446.5M857.8 446.5L937.0 472.0M937.0 472.0L1027.4 501.1M609.1 411.2L665.8 432.1M665.8 432.1L729.6 455.7M729.6 455.7L802.2 482.5M487.6 418.8L538.2 440.7M538.2 440.7L595.3 465.4M595.3 465.4L660.4 493.5M351.0 421.6L360.8 426.7M360.8 426.7L404.6 449.6M404.6 449.6L454.3 475.5"/><path shape-rendering="crispEdges" stroke="#d8d8d8" stroke-opacity="0.8" stroke-width="1.0" fill="none" d="M454.3 475.5L353.6 517.3M353.6 517.3L351.0 518.4M511.1 505.1L408.5 553.4M660.4 493.5L576.5 539.2M576.5 539.2L472.9 595.8M802.2 482.5L735.2 525.8M735.2 525.8L652.9 579.1M937.0 472.0L885.3 513.1M885.3 513.1L822.1 563.4M1027.4 501.1L981.4 548.6M1162.3 489.7L1131.6 534.7M1131.6 534.7L1093.8 590.1M1290.5 478.9L1273.7 521.5M1273.7 521.5L1253.0 573.8M1290.5 478.9L1317.0 485.7M1162.3 489.7L1273.7 521.5M1273.7 521.5L1317.0 533.9M1027.4 501.1L1131.6 534.7M1131.6 534.7L1253.0 573.8M802.2 482.5L885.3 513.1M885.3 513.1L981.4 548.6M981.4 548.6L1093.8 590.1M660.4 493.5L735.2 525.8M735.2 525.8L822.1 563.4M454.3 475.5L511.1 505.1M511.1 505.1L576.5 539.2M576.5 539.2L652.9 579.1M351.0 515.6L353.6 517.3M353.6 517.3L408.5 553.4M408.5 553.4L472.9 595.8"/><path shape-rendering="crispEdges" stroke="#d8d8d8" stroke-opacity="0.9" stroke-width="1.0" fill="none" d="M408.5 553.4L351.0 580.6M472.9 595.8L351.0 662.3M652.9 579.1L549.4 646.1M822.1 563.4L743.1 626.2M743.1 626.2L641.7 706.8M981.4 548.6L924.2 607.5M924.2 607.5L851.3 682.6M1093.8 590.1L1046.0 660.2M1253.0 573.8L1227.1 639.3M1227.1 639.3L1193.7 724.1M1253.0 573.8L1317.0 594.4M1093.8 590.1L1227.1 639.3M1227.1 639.3L1317.0 672.5M822.1 563.4L924.2 607.5M924.2 607.5L1046.0 660.2M652.9 579.1L743.1 626.2M743.1 626.2L851.3 682.6M472.9 595.8L549.4 646.1M549.4 646.1L641.7 706.8"/><path shape-rendering="crispEdges" stroke="#d8d8d8" stroke-opacity="1.0" stroke-width="1.0" fill="none" d="M549.4 646.1L415.3 732.8M415.3 732.8L351.0 774.4M641.7 706.8L506.7 814.1M506.7 814.1L399.9 899.0M851.3 682.6L755.4 781.5M755.4 781.5L641.4 899.0M1046.0 660.2L983.6 751.6M983.6 751.6L898.8 875.8M898.8 875.8L882.9 899.0M1193.7 724.1L1148.8 837.8M1148.8 837.8L1124.6 899.0M1046.0 660.2L1193.7 724.1M1193.7 724.1L1317.0 777.4M851.3 682.6L983.6 751.6M983.6 751.6L1148.8 837.8M1148.8 837.8L1266.1 899.0M641.7 706.8L755.4 781.5M755.4 781.5L898.8 875.8M898.8 875.8L934.1 899.0M351.0 675.7L415.3 732.8M415.3 732.8L506.7 814.1M506.7 814.1L602.2 899.0"/><g filter="brightness(0.86)" style="filter:brightness(0.86) saturate(0.85)"><defs><linearGradient id="pg" x1="0" y1="0" x2="1" y2="0"><stop offset="0" stop-color="#4d4236"/><stop offset="0.35" stop-color="#6a5b49"/><stop offset="0.7" stop-color="#544739"/><stop offset="1" stop-color="#3a3129"/></linearGradient><linearGradient id="lg" x1="0" y1="0" x2="1" y2="0"><stop offset="0" stop-color="#5f5242"/><stop offset="0.5" stop-color="#584b3c"/><stop offset="0.51" stop-color="#483d32"/><stop offset="1" stop-color="#3f352b"/></linearGradient></defs><path d="M800.0 495.0 L820.0 495.0 L821.0 537.0 L800.0 536.0 Z" fill="#4a3e32" /><path d="M823.0 500.0 L855.0 498.0 L855.0 535.0 L823.0 536.0 Z" fill="#4e4034" /><path d="M659.2 630.8 L684.2 638.3 L844.2 531.7 L833.3 529.2 Z" fill="#544739" /><path d="M684.2 638.3 L685.8 669.2 L844.2 548.3 L844.2 531.7 Z" fill="#44392e" /><path d="M659.2 630.8 L684.2 638.3 L685.8 669.2 L660.8 662.5 Z" fill="#5e4634" /><path d="M821.2 722.9 L854.8 739.2 L996.4 581.4 L989.2 577.3 Z" fill="#544739" /><path d="M854.8 739.2 L855.8 768.8 L995.3 605.8 L996.4 581.4 Z" fill="#44392e" /><path d="M821.2 722.9 L854.8 739.2 L855.8 768.8 L822.2 752.5 Z" fill="#5e4634" /><path d="M665.0 440.0 L683.0 446.0 L685.0 527.0 L663.0 520.0 Z" fill="#584c3e" /><path d="M683.0 446.0 L701.0 440.0 L707.0 515.0 L685.0 527.0 Z" fill="#473c31" /><path d="M662.5 520.0 L685.0 527.0 L684.0 636.0 L667.0 630.0 Z" fill="#5c4f40" /><path d="M685.0 527.0 L708.3 515.0 L716.7 617.0 L684.0 636.0 Z" fill="#4a3f33" /><path d="M662.5 520L685 527L708.3 515" fill="none" stroke="#6e523c" stroke-width="2.2"/><circle cx="671" cy="537" r="3.2" fill="#25262a"/><circle cx="694" cy="533" r="3.2" fill="#25262a"/><path d="M959.0 425.0 L976.0 431.0 L976.0 501.0 L955.0 495.0 Z" fill="#584c3e" /><path d="M976.0 431.0 L998.0 423.0 L1001.0 492.0 L976.0 501.0 Z" fill="#473c31" /><path d="M952.6 495.0 L976.0 501.0 L976.0 600.0 L953.0 596.0 Z" fill="#5c4f40" /><path d="M976.0 501.0 L1001.0 492.0 L998.0 592.0 L976.0 600.0 Z" fill="#4a3f33" /><path d="M952.6 495L976 501L1001 492" fill="none" stroke="#6e523c" stroke-width="2.2"/><circle cx="963" cy="511" r="3.2" fill="#25262a"/><circle cx="989" cy="507" r="3.2" fill="#25262a"/><path d="M844.6 505.0 L869.0 511.0 L867.0 606.0 L840.0 598.7 Z" fill="#584c3e" /><path d="M869.0 511.0 L884.0 505.0 L889.4 595.6 L867.0 606.0 Z" fill="#473c31" /><path d="M838.5 598.7 L867.0 606.0 L867.0 723.0 L838.5 721.0 Z" fill="#5c4f40" /><path d="M867.0 606.0 L889.4 595.6 L887.4 702.6 L867.0 723.0 Z" fill="#4a3f33" /><path d="M838.5 598.7L867 606L889.4 595.6" fill="none" stroke="#6e523c" stroke-width="2.2"/><circle cx="852" cy="621" r="3.2" fill="#25262a"/><circle cx="880" cy="615" r="3.2" fill="#25262a"/><path d="M613.0 407.0 L884.0 505.0 L884.0 516.0 L613.0 416.0 Z" fill="#43392f" /><path d="M884.0 505.0 L1039.0 384.0 L1039.0 394.0 L884.0 516.0 Z" fill="#5a4332" /><path d="M631.0 426.0 L669.0 436.0 L669.0 458.0 L631.0 448.0 Z" fill="#5e4634" /><path d="M871.0 500.0 L918.0 493.0 L918.0 523.0 L871.0 531.0 Z" fill="#5e4634" /><path d="M1008.0 402.0 L1032.0 396.0 L1032.0 424.0 L1008.0 430.0 Z" fill="#5e4634" /><path d="M613.0 407.0 L652.0 385.0 L700.0 367.0 L745.0 349.0 L799.0 331.0 L845.0 331.0 L1039.0 384.0 L884.0 505.0 Z" fill="#4f4336" /><path d="M644.0 394.3L909.8 484.8" stroke="#342b23" stroke-width="1.8"/><path d="M645.0 396.5L910.8 487.0" stroke="#5b4d3e" stroke-width="1.2"/><path d="M675.0 381.7L935.7 464.7" stroke="#342b23" stroke-width="1.8"/><path d="M676.0 383.9L936.7 466.9" stroke="#5b4d3e" stroke-width="1.2"/><path d="M706.0 369.0L961.5 444.5" stroke="#342b23" stroke-width="1.8"/><path d="M707.0 371.2L962.5 446.7" stroke="#5b4d3e" stroke-width="1.2"/><path d="M737.0 356.3L987.3 424.3" stroke="#342b23" stroke-width="1.8"/><path d="M738.0 358.5L988.3 426.5" stroke="#5b4d3e" stroke-width="1.2"/><path d="M768.0 343.7L1013.2 404.2" stroke="#342b23" stroke-width="1.8"/><path d="M769.0 345.9L1014.2 406.4" stroke="#5b4d3e" stroke-width="1.2"/><path d="M884.0 505.0 L909.8 484.8 L909.8 493.8 L884.0 515.0 Z" fill="#664a36" /><path d="M909.8 484.8 L935.7 464.7 L935.7 473.7 L909.8 494.8 Z" fill="#664a36" /><path d="M935.7 464.7 L961.5 444.5 L961.5 453.5 L935.7 474.7 Z" fill="#664a36" /><path d="M961.5 444.5 L987.3 424.3 L987.3 433.3 L961.5 454.5 Z" fill="#664a36" /><path d="M987.3 424.3 L1013.2 404.2 L1013.2 413.2 L987.3 434.3 Z" fill="#664a36" /><path d="M1013.2 404.2 L1039.0 384.0 L1039.0 393.0 L1013.2 414.2 Z" fill="#664a36" /><ellipse cx="655" cy="398" rx="3.2" ry="2" fill="#3b3d44"/><ellipse cx="697" cy="380" rx="3.2" ry="2" fill="#3b3d44"/><ellipse cx="740" cy="363" rx="3.2" ry="2" fill="#3b3d44"/><ellipse cx="785" cy="347" rx="3.2" ry="2" fill="#3b3d44"/><ellipse cx="828" cy="336" rx="3.2" ry="2" fill="#3b3d44"/><ellipse cx="920" cy="473" rx="3.2" ry="2" fill="#3b3d44"/><ellipse cx="952" cy="447" rx="3.2" ry="2" fill="#3b3d44"/><ellipse cx="972" cy="420" rx="3.2" ry="2" fill="#3b3d44"/><ellipse cx="993" cy="403" rx="3.2" ry="2" fill="#3b3d44"/><ellipse cx="1010" cy="390" rx="3.2" ry="2" fill="#3b3d44"/><path d="M609.7 271.4 L636.0 271.4 L651.6 410.4 L629.0 410.4 Z" fill="url(#pg)" /><ellipse cx="622.9" cy="271.4" rx="13.1" ry="3.2" fill="#6e5f4c"/><rect x="605.8" y="282" width="38.0" height="16.5" rx="6" fill="url(#pg)"/><path d="M606.8 286.9Q624.8 289.4 642.8 286.9" fill="none" stroke="#3e342b" stroke-width="0.9"/><path d="M606.8 291.1Q624.8 293.6 642.8 291.1" fill="none" stroke="#3e342b" stroke-width="0.9"/><path d="M606.8 295.2Q624.8 297.7 642.8 295.2" fill="none" stroke="#3e342b" stroke-width="0.9"/><path d="M799.4 223.7 L819.8 223.7 L820.8 336.5 L802.3 336.5 Z" fill="url(#pg)" /><ellipse cx="809.6" cy="223.7" rx="10.2" ry="3.2" fill="#6e5f4c"/><rect x="795.5" y="232.4" width="28.2" height="11.6" rx="6" fill="url(#pg)"/><path d="M796.5 235.9Q809.6 238.4 822.7 235.9" fill="none" stroke="#3e342b" stroke-width="0.9"/><path d="M796.5 238.8Q809.6 241.3 822.7 238.8" fill="none" stroke="#3e342b" stroke-width="0.9"/><path d="M796.5 241.7Q809.6 244.2 822.7 241.7" fill="none" stroke="#3e342b" stroke-width="0.9"/><path d="M643.8 288 C 665 296, 700 294, 736 282 S 790 255, 800.4 242" fill="none" stroke="#65553f" stroke-width="6"/><path d="M643.8 288 C 665 296, 700 294, 736 282 S 790 255, 800.4 242" fill="none" stroke="#3f352a" stroke-width="4" stroke-dasharray="1 3" stroke-opacity="0.55"/><path d="M1021.4 255.5 L1046.4 255.5 L1031.0 385.8 L1007.5 385.8 Z" fill="url(#pg)" /><ellipse cx="1033.9" cy="255.5" rx="12.5" ry="3.2" fill="#6e5f4c"/><rect x="1014.4" y="266.4" width="34.8" height="15.3" rx="6" fill="url(#pg)"/><path d="M1015.4 271.0Q1031.8 273.5 1048.2 271.0" fill="none" stroke="#3e342b" stroke-width="0.9"/><path d="M1015.4 274.8Q1031.8 277.3 1048.2 274.8" fill="none" stroke="#3e342b" stroke-width="0.9"/><path d="M1015.4 278.6Q1031.8 281.1 1048.2 278.6" fill="none" stroke="#3e342b" stroke-width="0.9"/><path d="M863.0 325.0 L895.0 325.0 L893.6 492.8 L860.3 492.8 Z" fill="url(#pg)" /><ellipse cx="879.0" cy="325.0" rx="16.0" ry="3.2" fill="#6e5f4c"/><rect x="856" y="341.4" width="44.5" height="19.4" rx="6" fill="url(#pg)"/><path d="M857.0 347.2Q878.2 349.7 899.5 347.2" fill="none" stroke="#3e342b" stroke-width="0.9"/><path d="M857.0 352.1Q878.2 354.6 899.5 352.1" fill="none" stroke="#3e342b" stroke-width="0.9"/><path d="M857.0 356.9Q878.2 359.4 899.5 356.9" fill="none" stroke="#3e342b" stroke-width="0.9"/><path d="M900.5 348.3 C 930 344, 965 330, 998 304 S 1018 281, 1022.8 276" fill="none" stroke="#65553f" stroke-width="6"/><path d="M900.5 348.3 C 930 344, 965 330, 998 304 S 1018 281, 1022.8 276" fill="none" stroke="#3f352a" stroke-width="4" stroke-dasharray="1 3" stroke-opacity="0.55"/></g></svg>
<div style="left:353px;top:897px;width:962px;height:4px;background:#fff;"></div>
<div style="left:353px;top:901px;width:962px;height:22px;background:#6b6b6b;"></div>
<div class="t" style="left:357px;top:902px;height:20px;line-height:20px;font-size:13px;color:#d4d4d4;font-weight:bold;letter-spacing:0.2px;">Motions</div>
<div style="left:353px;top:923px;width:962px;height:112px;background:#fff;border-left:1px solid #8a8a8a;border-bottom:1px solid #c8c8c8;box-sizing:border-box;"></div>
<div style="left:44px;top:898px;width:305px;height:22px;background:#6b6b6b;"></div>
<div class="t" style="left:48px;top:900px;height:20px;line-height:20px;font-size:13px;color:#d4d4d4;font-weight:bold;letter-spacing:0.45px;">#Management Tags + Notes</div>
<div style="left:44px;top:920px;width:305px;height:115px;background:#fff;border-bottom:1px solid #c8c8c8;box-sizing:border-box;"></div>
<div class="t" style="left:60px;top:923px;height:18px;line-height:18px;font-size:13px;color:#111;font-weight:normal;letter-spacing:0.7px;">#3D</div>
<div style="left:46px;top:61px;width:55px;height:24px;background:#f8f8f8;border:1px solid #e2e2e2;border-radius:4px;"></div>
<div style="left:106px;top:61px;width:24px;height:24px;background:#f8f8f8;border:1px solid #e2e2e2;border-radius:4px;"></div>
<div style="left:134px;top:61px;width:25px;height:24px;background:#f8f8f8;border:1px solid #e2e2e2;border-radius:4px;"></div>
<div style="left:164px;top:61px;width:24px;height:24px;background:#f8f8f8;border:1px solid #e2e2e2;border-radius:4px;"></div>
<div style="left:192px;top:61px;width:25px;height:24px;background:#f8f8f8;border:1px solid #e2e2e2;border-radius:4px;"></div>
<svg class="a" style="left:49px;top:62px" width="22" height="22"><circle cx="10.8" cy="11" r="10.5" fill="#1a7ee6"/><path d="M10.8 4.5v13M4.3 11h13" stroke="#fff" stroke-width="4"/></svg>
<div class="t" style="left:75px;top:64px;height:20px;line-height:20px;font-size:13px;color:#111;font-weight:normal;letter-spacing:0.6px;">Add</div>
<svg class="a" style="left:110px;top:65px" width="17" height="17"><path d="M0 1h6l2 2h8v13H0z" fill="#555"/><path d="M8 6v8M4 10h8" stroke="#fff" stroke-width="2.2"/></svg>
<svg class="a" style="left:138px;top:65px" width="18" height="17"><path d="M6 0h7l4 4v9H6z" fill="#555"/><path d="M7.5 1.5h5l3 3v7h-8z" fill="#f8f8f8"/><path d="M0 5h7l4 4v8H0z" fill="#555"/><path d="M1.5 6.5h5l3 3v6h-8z" fill="#f8f8f8"/><path d="M3 11h5M3 13.5h5" stroke="#555" stroke-width="1.3"/></svg>
<svg class="a" style="left:168px;top:64px" width="16" height="18"><rect x="0" y="2" width="16" height="16" rx="2" fill="#cfcfcf"/><rect x="4" y="0" width="8" height="4" rx="1" fill="#bdbdbd"/><rect x="2.5" y="6" width="11" height="9" fill="#e4e4e4"/></svg>
<svg class="a" style="left:196px;top:64px" width="17" height="18"><rect x="6" y="0" width="5" height="2" fill="#555"/><rect x="0" y="2" width="17" height="3" fill="#555"/><path d="M2 6h13l-1 12H3z" fill="#555"/><path d="M6 8v8M8.5 8v8M11 8v8" stroke="#f8f8f8" stroke-width="1.3"/></svg>
<div style="left:355px;top:61px;width:60px;height:24px;background:#f8f8f8;border:1px solid #e2e2e2;border-radius:4px;"></div>
<div style="left:421px;top:61px;width:24px;height:24px;background:#f8f8f8;border:1px solid #e2e2e2;border-radius:4px;"></div>
<div style="left:451px;top:61px;width:121px;height:24px;background:#f8f8f8;border:1px solid #e2e2e2;border-radius:4px;"></div>
<svg class="a" style="left:363px;top:65px" width="16" height="17"><path d="M1 0L15 8.5L1 17z" fill="#666"/></svg>
<div class="t" style="left:385px;top:64px;height:20px;line-height:20px;font-size:13px;color:#111;font-weight:normal;letter-spacing:0.6px;">Play</div>
<svg class="a" style="left:426px;top:66px" width="14" height="15"><rect x="0" y="0" width="4" height="15" rx="1.5" fill="#555"/><rect x="8" y="0" width="4" height="15" rx="1.5" fill="#555"/></svg>
<svg class="a" style="left:457px;top:63px" width="14" height="20"><ellipse cx="7" cy="10" rx="6" ry="9" fill="none" stroke="#555" stroke-width="1.8"/><ellipse cx="7" cy="10" rx="2.5" ry="9" fill="none" stroke="#555" stroke-width="1.5"/><path d="M1.5 6h11M1.5 10h11M1.5 14h11" stroke="#555" stroke-width="1.3"/></svg>
<div class="t" style="left:480px;top:64px;height:20px;line-height:20px;font-size:13px;color:#111;font-weight:normal;letter-spacing:0.55px;">View Collision</div>
<div style="left:1319px;top:55px;width:292px;height:35px;background:#f8f8f8;"></div>
<div style="left:1322px;top:61px;width:56px;height:24px;background:#fdfdfd;border:1px solid #e2e2e2;border-radius:4px;"></div>
<div style="left:1383px;top:61px;width:25px;height:24px;background:#fdfdfd;border:1px solid #e2e2e2;border-radius:4px;"></div>
<div style="left:1413px;top:61px;width:25px;height:24px;background:#fdfdfd;border:1px solid #e2e2e2;border-radius:4px;"></div>
<div style="left:1443px;top:61px;width:25px;height:24px;background:#fdfdfd;border:1px solid #e2e2e2;border-radius:4px;"></div>
<svg class="a" style="left:1330px;top:66px" width="15" height="15"><path d="M7.5 0v15M0 7.5h15" stroke="#555" stroke-width="3.5"/></svg>
<div class="t" style="left:1352px;top:64px;height:20px;line-height:20px;font-size:13px;color:#111;font-weight:normal;letter-spacing:0.6px;">Add</div>
<svg class="a" style="left:1387px;top:65px" width="18" height="17" opacity="0.35"><path d="M6 0h7l4 4v9H6z" fill="#777"/><path d="M7.5 1.5h5l3 3v7h-8z" fill="#fdfdfd"/><path d="M0 5h7l4 4v8H0z" fill="#777"/><path d="M1.5 6.5h5l3 3v6h-8z" fill="#fdfdfd"/></svg>
<svg class="a" style="left:1417px;top:64px" width="16" height="18" opacity="0.45"><rect x="0" y="2" width="16" height="16" rx="2" fill="#999"/><rect x="4" y="0" width="8" height="4" rx="1" fill="#888"/><rect x="2.5" y="6" width="11" height="9" fill="#ccc"/></svg>
<svg class="a" style="left:1447px;top:64px" width="17" height="18" opacity="0.35"><rect x="6" y="0" width="5" height="2" fill="#777"/><rect x="0" y="2" width="17" height="3" fill="#777"/><path d="M2 6h13l-1 12H3z" fill="#777"/><path d="M6 8v8M8.5 8v8M11 8v8" stroke="#fdfdfd" stroke-width="1.3"/></svg>
<div style="left:45px;top:92px;width:286px;height:805px;overflow:hidden;">
<div style="left:1px;top:674px;width:284px;height:24px;background:#0078d7;"></div>
<div style="left:22px;top:0px;width:1px;height:805px;background-image:linear-gradient(#a0a0a0 50%,transparent 50%);background-size:1px 2px;"></div>
<div style="left:49px;top:0px;width:1px;height:469px;background-image:linear-gradient(#a0a0a0 50%,transparent 50%);background-size:1px 2px;"></div>
<div style="left:49px;top:505px;width:1px;height:277px;background-image:linear-gradient(#a0a0a0 50%,transparent 50%);background-size:1px 2px;"></div>
<div style="left:49px;top:13px;width:12px;height:1px;background-image:linear-gradient(90deg,#a0a0a0 50%,transparent 50%);background-size:2px 1px;"></div>
<div style="left:61px;top:1px;width:24px;height:24px;background:#4b4b4b;"></div>
<div class="t" style="left:88px;top:3px;height:24px;line-height:24px;font-size:13px;color:#111;letter-spacing:0.8px;">elevation-02</div>
<div style="left:49px;top:37px;width:12px;height:1px;background-image:linear-gradient(90deg,#a0a0a0 50%,transparent 50%);background-size:2px 1px;"></div>
<div style="left:61px;top:25px;width:24px;height:24px;background:#4b4b4b;"></div>
<div class="t" style="left:88px;top:27px;height:24px;line-height:24px;font-size:13px;color:#111;letter-spacing:0.8px;">elevation-01</div>
<div style="left:49px;top:61px;width:12px;height:1px;background-image:linear-gradient(90deg,#a0a0a0 50%,transparent 50%);background-size:2px 1px;"></div>
<div style="left:61px;top:49px;width:24px;height:24px;background:#4b4b4b;"></div>
<div class="t" style="left:88px;top:51px;height:24px;line-height:24px;font-size:13px;color:#111;letter-spacing:0.8px;">rope-detail-03</div>
<div style="left:49px;top:85px;width:12px;height:1px;background-image:linear-gradient(90deg,#a0a0a0 50%,transparent 50%);background-size:2px 1px;"></div>
<div style="left:61px;top:73px;width:24px;height:24px;background:#4b4b4b;"></div>
<div class="t" style="left:88px;top:75px;height:24px;line-height:24px;font-size:13px;color:#111;letter-spacing:0.8px;">rope-detail-02</div>
<div style="left:49px;top:109px;width:12px;height:1px;background-image:linear-gradient(90deg,#a0a0a0 50%,transparent 50%);background-size:2px 1px;"></div>
<div style="left:61px;top:97px;width:24px;height:24px;background:#4b4b4b;"></div>
<div class="t" style="left:88px;top:99px;height:24px;line-height:24px;font-size:13px;color:#111;letter-spacing:0.8px;">rope-detail-01</div>
<div style="left:49px;top:133px;width:12px;height:1px;background-image:linear-gradient(90deg,#a0a0a0 50%,transparent 50%);background-size:2px 1px;"></div>
<div style="left:61px;top:121px;width:24px;height:24px;background:#4b4b4b;"></div>
<div class="t" style="left:88px;top:123px;height:24px;line-height:24px;font-size:13px;color:#111;letter-spacing:0.8px;">platform-ladder-01</div>
<div style="left:49px;top:157px;width:12px;height:1px;background-image:linear-gradient(90deg,#a0a0a0 50%,transparent 50%);background-size:2px 1px;"></div>
<div style="left:61px;top:145px;width:24px;height:24px;background:#4b4b4b;"></div>
<div class="t" style="left:88px;top:147px;height:24px;line-height:24px;font-size:13px;color:#111;letter-spacing:0.8px;">platform-12</div>
<div style="left:49px;top:181px;width:12px;height:1px;background-image:linear-gradient(90deg,#a0a0a0 50%,transparent 50%);background-size:2px 1px;"></div>
<div style="left:61px;top:169px;width:24px;height:24px;background:#4b4b4b;"></div>
<div class="t" style="left:88px;top:171px;height:24px;line-height:24px;font-size:13px;color:#111;letter-spacing:0.8px;">platform-11</div>
<div style="left:49px;top:205px;width:12px;height:1px;background-image:linear-gradient(90deg,#a0a0a0 50%,transparent 50%);background-size:2px 1px;"></div>
<div style="left:61px;top:193px;width:24px;height:24px;background:#4b4b4b;"></div>
<div class="t" style="left:88px;top:195px;height:24px;line-height:24px;font-size:13px;color:#111;letter-spacing:0.8px;">platform-10</div>
<div style="left:49px;top:229px;width:12px;height:1px;background-image:linear-gradient(90deg,#a0a0a0 50%,transparent 50%);background-size:2px 1px;"></div>
<div style="left:61px;top:217px;width:24px;height:24px;background:#4b4b4b;"></div>
<div class="t" style="left:88px;top:219px;height:24px;line-height:24px;font-size:13px;color:#111;letter-spacing:0.8px;">platform-09</div>
<div style="left:49px;top:253px;width:12px;height:1px;background-image:linear-gradient(90deg,#a0a0a0 50%,transparent 50%);background-size:2px 1px;"></div>
<div style="left:61px;top:241px;width:24px;height:24px;background:#4b4b4b;"></div>
<div class="t" style="left:88px;top:243px;height:24px;line-height:24px;font-size:13px;color:#111;letter-spacing:0.8px;">platform-08</div>
<div style="left:49px;top:277px;width:12px;height:1px;background-image:linear-gradient(90deg,#a0a0a0 50%,transparent 50%);background-size:2px 1px;"></div>
<div style="left:61px;top:265px;width:24px;height:24px;background:#4b4b4b;"></div>
<div class="t" style="left:88px;top:267px;height:24px;line-height:24px;font-size:13px;color:#111;letter-spacing:0.8px;">platform-07</div>
<div style="left:49px;top:301px;width:12px;height:1px;background-image:linear-gradient(90deg,#a0a0a0 50%,transparent 50%);background-size:2px 1px;"></div>
<div style="left:61px;top:289px;width:24px;height:24px;background:#4b4b4b;"></div>
<div class="t" style="left:88px;top:291px;height:24px;line-height:24px;font-size:13px;color:#111;letter-spacing:0.8px;">platform-06</div>
<div style="left:49px;top:325px;width:12px;height:1px;background-image:linear-gradient(90deg,#a0a0a0 50%,transparent 50%);background-size:2px 1px;"></div>
<div style="left:61px;top:313px;width:24px;height:24px;background:#4b4b4b;"></div>
<div class="t" style="left:88px;top:315px;height:24px;line-height:24px;font-size:13px;color:#111;letter-spacing:0.8px;">platform-05</div>
<div style="left:49px;top:349px;width:12px;height:1px;background-image:linear-gradient(90deg,#a0a0a0 50%,transparent 50%);background-size:2px 1px;"></div>
<div style="left:61px;top:337px;width:24px;height:24px;background:#4b4b4b;"></div>
<div class="t" style="left:88px;top:339px;height:24px;line-height:24px;font-size:13px;color:#111;letter-spacing:0.8px;">platform-04</div>
<div style="left:49px;top:373px;width:12px;height:1px;background-image:linear-gradient(90deg,#a0a0a0 50%,transparent 50%);background-size:2px 1px;"></div>
<div style="left:61px;top:361px;width:24px;height:24px;background:#4b4b4b;"></div>
<div class="t" style="left:88px;top:363px;height:24px;line-height:24px;font-size:13px;color:#111;letter-spacing:0.8px;">platform-03-fix</div>
<div style="left:49px;top:397px;width:12px;height:1px;background-image:linear-gradient(90deg,#a0a0a0 50%,transparent 50%);background-size:2px 1px;"></div>
<div style="left:61px;top:385px;width:24px;height:24px;background:#4b4b4b;"></div>
<div class="t" style="left:88px;top:387px;height:24px;line-height:24px;font-size:13px;color:#111;letter-spacing:0.8px;">platform-03-hole</div>
<div style="left:49px;top:421px;width:12px;height:1px;background-image:linear-gradient(90deg,#a0a0a0 50%,transparent 50%);background-size:2px 1px;"></div>
<div style="left:61px;top:409px;width:24px;height:24px;background:#4b4b4b;"></div>
<div class="t" style="left:88px;top:411px;height:24px;line-height:24px;font-size:13px;color:#111;letter-spacing:0.8px;">platform-03</div>
<div style="left:49px;top:445px;width:12px;height:1px;background-image:linear-gradient(90deg,#a0a0a0 50%,transparent 50%);background-size:2px 1px;"></div>
<div style="left:61px;top:433px;width:24px;height:24px;background:#4b4b4b;"></div>
<div class="t" style="left:88px;top:435px;height:24px;line-height:24px;font-size:13px;color:#111;letter-spacing:0.8px;">platform-02</div>
<div style="left:49px;top:469px;width:12px;height:1px;background-image:linear-gradient(90deg,#a0a0a0 50%,transparent 50%);background-size:2px 1px;"></div>
<div style="left:61px;top:457px;width:24px;height:24px;background:#4b4b4b;"></div>
<div class="t" style="left:88px;top:459px;height:24px;line-height:24px;font-size:13px;color:#111;letter-spacing:0.8px;">platform-01</div>
<div style="left:18px;top:489px;width:9px;height:9px;border:1px solid #a8a8a8;background:#fff;"></div>
<div style="left:20px;top:493px;width:5px;height:1px;background:#777;"></div>
<div style="left:27px;top:493px;width:8px;height:1px;background-image:linear-gradient(90deg,#a0a0a0 50%,transparent 50%);background-size:2px 1px;"></div>
<svg style="left:37px;top:485px" width="22" height="18"><path d="M1.5 16.5V2.5h6l2 2h7v4" fill="#fff" stroke="#111" stroke-width="2.2" stroke-linejoin="round"/><path d="M2 16.5L6 8.5h14.5l-4 8z" fill="#111" stroke="#111" stroke-width="1.5" stroke-linejoin="round"/></svg>
<div class="t" style="left:61px;top:483px;height:24px;line-height:24px;font-size:13px;color:#111;letter-spacing:0.0px;font-size:12px;">PREFABS</div>
<div style="left:49px;top:517px;width:12px;height:1px;background-image:linear-gradient(90deg,#a0a0a0 50%,transparent 50%);background-size:2px 1px;"></div>
<div style="left:61px;top:505px;width:24px;height:24px;background:#4b4b4b;"></div>
<div class="t" style="left:88px;top:507px;height:24px;line-height:24px;font-size:13px;color:#111;letter-spacing:0.8px;">platform-06_1</div>
<div style="left:49px;top:541px;width:12px;height:1px;background-image:linear-gradient(90deg,#a0a0a0 50%,transparent 50%);background-size:2px 1px;"></div>
<div style="left:61px;top:529px;width:24px;height:24px;background:#4b4b4b;"></div>
<div class="t" style="left:88px;top:531px;height:24px;line-height:24px;font-size:13px;color:#111;letter-spacing:0.8px;">elevation-02_J</div>
<div style="left:49px;top:565px;width:12px;height:1px;background-image:linear-gradient(90deg,#a0a0a0 50%,transparent 50%);background-size:2px 1px;"></div>
<div style="left:61px;top:553px;width:24px;height:24px;background:#4b4b4b;"></div>
<div class="t" style="left:88px;top:555px;height:24px;line-height:24px;font-size:13px;color:#111;letter-spacing:0.8px;">wooden-plank-01_1</div>
<div style="left:49px;top:589px;width:12px;height:1px;background-image:linear-gradient(90deg,#a0a0a0 50%,transparent 50%);background-size:2px 1px;"></div>
<div style="left:61px;top:577px;width:24px;height:24px;background:#4b4b4b;"></div>
<div class="t" style="left:88px;top:579px;height:24px;line-height:24px;font-size:13px;color:#111;letter-spacing:0.8px;">elevation-02_I</div>
<div style="left:49px;top:613px;width:12px;height:1px;background-image:linear-gradient(90deg,#a0a0a0 50%,transparent 50%);background-size:2px 1px;"></div>
<div style="left:61px;top:601px;width:24px;height:24px;background:#4b4b4b;"></div>
<div class="t" style="left:88px;top:603px;height:24px;line-height:24px;font-size:13px;color:#111;letter-spacing:0.8px;">elevation-02_H</div>
<div style="left:49px;top:637px;width:12px;height:1px;background-image:linear-gradient(90deg,#a0a0a0 50%,transparent 50%);background-size:2px 1px;"></div>
<div style="left:61px;top:625px;width:24px;height:24px;background:#4b4b4b;"></div>
<div class="t" style="left:88px;top:627px;height:24px;line-height:24px;font-size:13px;color:#111;letter-spacing:0.8px;">elevation-02_G</div>
<div style="left:49px;top:661px;width:12px;height:1px;background-image:linear-gradient(90deg,#a0a0a0 50%,transparent 50%);background-size:2px 1px;"></div>
<div style="left:61px;top:649px;width:24px;height:24px;background:#4b4b4b;"></div>
<div class="t" style="left:88px;top:651px;height:24px;line-height:24px;font-size:13px;color:#111;letter-spacing:0.8px;">elevation-02_F</div>
<div style="left:49px;top:685px;width:12px;height:1px;background-image:linear-gradient(90deg,#a0a0a0 50%,transparent 50%);background-size:2px 1px;"></div>
<div style="left:61px;top:673px;width:24px;height:24px;background:#4b4b4b;"></div>
<div class="t" style="left:88px;top:675px;height:24px;line-height:24px;font-size:13px;color:#fff;letter-spacing:0.8px;">elevation-02_E</div>
<div style="left:49px;top:709px;width:12px;height:1px;background-image:linear-gradient(90deg,#a0a0a0 50%,transparent 50%);background-size:2px 1px;"></div>
<div style="left:61px;top:697px;width:24px;height:24px;background:#4b4b4b;"></div>
<div class="t" style="left:88px;top:699px;height:24px;line-height:24px;font-size:13px;color:#111;letter-spacing:0.8px;">elevation-02_D</div>
<div style="left:49px;top:733px;width:12px;height:1px;background-image:linear-gradient(90deg,#a0a0a0 50%,transparent 50%);background-size:2px 1px;"></div>
<div style="left:61px;top:721px;width:24px;height:24px;background:#4b4b4b;"></div>
<div class="t" style="left:88px;top:723px;height:24px;line-height:24px;font-size:13px;color:#111;letter-spacing:0.8px;">elevation-02_C</div>
<div style="left:49px;top:757px;width:12px;height:1px;background-image:linear-gradient(90deg,#a0a0a0 50%,transparent 50%);background-size:2px 1px;"></div>
<div style="left:61px;top:745px;width:24px;height:24px;background:#4b4b4b;"></div>
<div class="t" style="left:88px;top:747px;height:24px;line-height:24px;font-size:13px;color:#111;letter-spacing:0.8px;">elevation-02_B</div>
<div style="left:49px;top:781px;width:12px;height:1px;background-image:linear-gradient(90deg,#a0a0a0 50%,transparent 50%);background-size:2px 1px;"></div>
<div style="left:61px;top:769px;width:24px;height:24px;background:#4b4b4b;"></div>
<div class="t" style="left:88px;top:771px;height:24px;line-height:24px;font-size:13px;color:#111;letter-spacing:0.8px;">elevation-02_A</div>
<div style="left:18px;top:801px;width:9px;height:9px;border:1px solid #a8a8a8;background:#fff;"></div>
<div style="left:20px;top:805px;width:5px;height:1px;background:#777;"></div>
<div style="left:27px;top:805px;width:8px;height:1px;background-image:linear-gradient(90deg,#a0a0a0 50%,transparent 50%);background-size:2px 1px;"></div>
<svg style="left:37px;top:797px" width="22" height="18"><path d="M1.5 16.5V3h6l2 2.5h9.5v11z" fill="#fff" stroke="#111" stroke-width="2.2" stroke-linejoin="round"/></svg>
<div class="t" style="left:61px;top:795px;height:24px;line-height:24px;font-size:13px;color:#111;letter-spacing:0.0px;font-size:12px;">BAKIN FILES</div>
<svg style="left:61px;top:1px" width="24" height="24"><rect x="4" y="6" width="2" height="7" fill="#8d6f4a" opacity="0.4"/><rect x="9" y="9" width="2" height="7" fill="#8d6f4a" opacity="0.4"/><rect x="14" y="3" width="2" height="7" fill="#8d6f4a" opacity="0.4"/><rect x="19" y="7" width="2" height="7" fill="#8d6f4a" opacity="0.4"/></svg>
<svg style="left:61px;top:25px" width="24" height="24"><rect x="4" y="6" width="2" height="7" fill="#8d6f4a" opacity="0.4"/><rect x="9" y="9" width="2" height="7" fill="#8d6f4a" opacity="0.4"/><rect x="14" y="3" width="2" height="7" fill="#8d6f4a" opacity="0.4"/><rect x="19" y="7" width="2" height="7" fill="#8d6f4a" opacity="0.4"/></svg>
<svg style="left:61px;top:49px" width="24" height="24"><path d="M4 8 Q12 18 21 14" fill="none" stroke="#8d6f4a" stroke-width="1.2" opacity="0.45"/></svg>
<svg style="left:61px;top:73px" width="24" height="24"><path d="M4 8 Q12 18 21 14" fill="none" stroke="#8d6f4a" stroke-width="1.2" opacity="0.45"/></svg>
<svg style="left:61px;top:97px" width="24" height="24"><path d="M4 8 Q12 18 21 14" fill="none" stroke="#8d6f4a" stroke-width="1.2" opacity="0.45"/></svg>
<svg style="left:61px;top:121px" width="24" height="24"><path d="M2 12 L13 8 L22 12 L11 17Z" fill="#8d6f4a" opacity="0.38"/><path d="M4 13v5M11 17v4M20 13v5" stroke="#8d6f4a" stroke-width="1.3" opacity="0.35"/></svg>
<svg style="left:61px;top:145px" width="24" height="24"><path d="M2 12 L13 8 L22 12 L11 17Z" fill="#8d6f4a" opacity="0.38"/><path d="M4 13v5M11 17v4M20 13v5" stroke="#8d6f4a" stroke-width="1.3" opacity="0.35"/></svg>
<svg style="left:61px;top:169px" width="24" height="24"><path d="M2 12 L13 8 L22 12 L11 17Z" fill="#8d6f4a" opacity="0.38"/><path d="M4 13v5M11 17v4M20 13v5" stroke="#8d6f4a" stroke-width="1.3" opacity="0.35"/></svg>
<svg style="left:61px;top:193px" width="24" height="24"><path d="M2 12 L13 8 L22 12 L11 17Z" fill="#8d6f4a" opacity="0.38"/><path d="M4 13v5M11 17v4M20 13v5" stroke="#8d6f4a" stroke-width="1.3" opacity="0.35"/></svg>
<svg style="left:61px;top:217px" width="24" height="24"><path d="M2 12 L13 8 L22 12 L11 17Z" fill="#8d6f4a" opacity="0.38"/><path d="M4 13v5M11 17v4M20 13v5" stroke="#8d6f4a" stroke-width="1.3" opacity="0.35"/></svg>
<svg style="left:61px;top:241px" width="24" height="24"><path d="M2 12 L13 8 L22 12 L11 17Z" fill="#8d6f4a" opacity="0.38"/><path d="M4 13v5M11 17v4M20 13v5" stroke="#8d6f4a" stroke-width="1.3" opacity="0.35"/></svg>
<svg style="left:61px;top:265px" width="24" height="24"><path d="M2 12 L13 8 L22 12 L11 17Z" fill="#8d6f4a" opacity="0.38"/><path d="M4 13v5M11 17v4M20 13v5" stroke="#8d6f4a" stroke-width="1.3" opacity="0.35"/></svg>
<svg style="left:61px;top:289px" width="24" height="24"><path d="M2 12 L13 8 L22 12 L11 17Z" fill="#8d6f4a" opacity="0.38"/><path d="M4 13v5M11 17v4M20 13v5" stroke="#8d6f4a" stroke-width="1.3" opacity="0.35"/></svg>
<svg style="left:61px;top:313px" width="24" height="24"><path d="M2 12 L13 8 L22 12 L11 17Z" fill="#8d6f4a" opacity="0.38"/><path d="M4 13v5M11 17v4M20 13v5" stroke="#8d6f4a" stroke-width="1.3" opacity="0.35"/></svg>
<svg style="left:61px;top:337px" width="24" height="24"><path d="M2 12 L13 8 L22 12 L11 17Z" fill="#8d6f4a" opacity="0.38"/><path d="M4 13v5M11 17v4M20 13v5" stroke="#8d6f4a" stroke-width="1.3" opacity="0.35"/></svg>
<svg style="left:61px;top:361px" width="24" height="24"><path d="M2 12 L13 8 L22 12 L11 17Z" fill="#8d6f4a" opacity="0.38"/><path d="M4 13v5M11 17v4M20 13v5" stroke="#8d6f4a" stroke-width="1.3" opacity="0.35"/></svg>
<svg style="left:61px;top:385px" width="24" height="24"><path d="M2 12 L13 8 L22 12 L11 17Z" fill="#8d6f4a" opacity="0.38"/><path d="M4 13v5M11 17v4M20 13v5" stroke="#8d6f4a" stroke-width="1.3" opacity="0.35"/></svg>
<svg style="left:61px;top:409px" width="24" height="24"><path d="M2 12 L13 8 L22 12 L11 17Z" fill="#8d6f4a" opacity="0.38"/><path d="M4 13v5M11 17v4M20 13v5" stroke="#8d6f4a" stroke-width="1.3" opacity="0.35"/></svg>
<svg style="left:61px;top:433px" width="24" height="24"><path d="M2 12 L13 8 L22 12 L11 17Z" fill="#8d6f4a" opacity="0.38"/><path d="M4 13v5M11 17v4M20 13v5" stroke="#8d6f4a" stroke-width="1.3" opacity="0.35"/></svg>
<svg style="left:61px;top:457px" width="24" height="24"><path d="M2 12 L13 8 L22 12 L11 17Z" fill="#8d6f4a" opacity="0.38"/><path d="M4 13v5M11 17v4M20 13v5" stroke="#8d6f4a" stroke-width="1.3" opacity="0.35"/></svg>
<svg style="left:61px;top:505px" width="24" height="24"><path d="M2 12 L13 8 L22 12 L11 17Z" fill="#8d6f4a" opacity="0.38"/><path d="M4 13v5M11 17v4M20 13v5" stroke="#8d6f4a" stroke-width="1.3" opacity="0.35"/></svg>
<svg style="left:61px;top:529px" width="24" height="24"><rect x="4" y="6" width="2" height="7" fill="#8d6f4a" opacity="0.4"/><rect x="9" y="9" width="2" height="7" fill="#8d6f4a" opacity="0.4"/><rect x="14" y="3" width="2" height="7" fill="#8d6f4a" opacity="0.4"/><rect x="19" y="7" width="2" height="7" fill="#8d6f4a" opacity="0.4"/></svg>
<svg style="left:61px;top:553px" width="24" height="24"><path d="M3 15 L21 9" stroke="#8d6f4a" stroke-width="3" opacity="0.7"/></svg>
<svg style="left:61px;top:577px" width="24" height="24"><rect x="4" y="6" width="2" height="7" fill="#8d6f4a" opacity="0.4"/><rect x="9" y="9" width="2" height="7" fill="#8d6f4a" opacity="0.4"/><rect x="14" y="3" width="2" height="7" fill="#8d6f4a" opacity="0.4"/><rect x="19" y="7" width="2" height="7" fill="#8d6f4a" opacity="0.4"/></svg>
<svg style="left:61px;top:601px" width="24" height="24"><rect x="4" y="6" width="2" height="7" fill="#8d6f4a" opacity="0.4"/><rect x="9" y="9" width="2" height="7" fill="#8d6f4a" opacity="0.4"/><rect x="14" y="3" width="2" height="7" fill="#8d6f4a" opacity="0.4"/><rect x="19" y="7" width="2" height="7" fill="#8d6f4a" opacity="0.4"/></svg>
<svg style="left:61px;top:625px" width="24" height="24"><rect x="4" y="6" width="2" height="7" fill="#8d6f4a" opacity="0.4"/><rect x="9" y="9" width="2" height="7" fill="#8d6f4a" opacity="0.4"/><rect x="14" y="3" width="2" height="7" fill="#8d6f4a" opacity="0.4"/><rect x="19" y="7" width="2" height="7" fill="#8d6f4a" opacity="0.4"/></svg>
<svg style="left:61px;top:649px" width="24" height="24"><rect x="4" y="6" width="2" height="7" fill="#8d6f4a" opacity="0.4"/><rect x="9" y="9" width="2" height="7" fill="#8d6f4a" opacity="0.4"/><rect x="14" y="3" width="2" height="7" fill="#8d6f4a" opacity="0.4"/><rect x="19" y="7" width="2" height="7" fill="#8d6f4a" opacity="0.4"/></svg>
<svg style="left:61px;top:673px" width="24" height="24"><rect x="4" y="6" width="2" height="7" fill="#8d6f4a" opacity="0.4"/><rect x="9" y="9" width="2" height="7" fill="#8d6f4a" opacity="0.4"/><rect x="14" y="3" width="2" height="7" fill="#8d6f4a" opacity="0.4"/><rect x="19" y="7" width="2" height="7" fill="#8d6f4a" opacity="0.4"/></svg>
<svg style="left:61px;top:697px" width="24" height="24"><rect x="4" y="6" width="2" height="7" fill="#8d6f4a" opacity="0.4"/><rect x="9" y="9" width="2" height="7" fill="#8d6f4a" opacity="0.4"/><rect x="14" y="3" width="2" height="7" fill="#8d6f4a" opacity="0.4"/><rect x="19" y="7" width="2" height="7" fill="#8d6f4a" opacity="0.4"/></svg>
<svg style="left:61px;top:721px" width="24" height="24"><rect x="4" y="6" width="2" height="7" fill="#8d6f4a" opacity="0.4"/><rect x="9" y="9" width="2" height="7" fill="#8d6f4a" opacity="0.4"/><rect x="14" y="3" width="2" height="7" fill="#8d6f4a" opacity="0.4"/><rect x="19" y="7" width="2" height="7" fill="#8d6f4a" opacity="0.4"/></svg>
<svg style="left:61px;top:745px" width="24" height="24"><rect x="4" y="6" width="2" height="7" fill="#8d6f4a" opacity="0.4"/><rect x="9" y="9" width="2" height="7" fill="#8d6f4a" opacity="0.4"/><rect x="14" y="3" width="2" height="7" fill="#8d6f4a" opacity="0.4"/><rect x="19" y="7" width="2" height="7" fill="#8d6f4a" opacity="0.4"/></svg>
<svg style="left:61px;top:769px" width="24" height="24"><rect x="4" y="6" width="2" height="7" fill="#8d6f4a" opacity="0.4"/><rect x="9" y="9" width="2" height="7" fill="#8d6f4a" opacity="0.4"/><rect x="14" y="3" width="2" height="7" fill="#8d6f4a" opacity="0.4"/><rect x="19" y="7" width="2" height="7" fill="#8d6f4a" opacity="0.4"/></svg>
</div>
<svg class="a" style="left:13px;top:62px" width="20" height="19" viewBox="0 0 18 17"><path d="M1 5L5 1H17V12L13 16H1Z" fill="#555"/><path d="M2.8 6.2H12.2V14.2H2.8Z" fill="#fff"/><path d="M5.5 2.6H15L12.6 4.8H3.2Z" fill="#fff"/><path d="M3 12L9 6M5 14L12 7M8 14L12.2 9.8M3 9L6 6" stroke="#555" stroke-width="1.1"/><path d="M14 7.5L16 5.5M14 10.5L16 8.5" stroke="#fff" stroke-width="0.9"/></svg>
<svg class="a" style="left:10px;top:91px" width="25" height="24"><path d="M1 3.5L2.5 2H8L9 3.5V5H22.5L24 6.5V19.5L22.5 21H14L12.5 23H2.5L1 21.5Z" fill="#555"/><text x="3.2" y="17.5" font-family="Liberation Sans" font-weight="bold" font-size="12.5" fill="#fff" letter-spacing="-0.6">3D</text></svg>
<svg class="a" style="left:10px;top:315px" width="25" height="23" viewBox="0 0 23 20"><path d="M2 2.5h6v2h11v12h-9v2H2z" fill="#fff" stroke="#555" stroke-width="1.6"/><text x="3.6" y="14.8" font-family="Liberation Sans" font-size="10.5" font-weight="bold" fill="#555" letter-spacing="-0.3">2D</text></svg>
<svg class="a" style="left:12px;top:443px" width="20" height="23"><path d="M6 6L16 2V16" fill="none" stroke="#555" stroke-width="2.2"/><path d="M6 6V19" stroke="#555" stroke-width="2.2"/><path d="M6 4L16 0.5V5L6 9z" fill="#555"/><ellipse cx="3.8" cy="19" rx="3.3" ry="2.7" fill="#555"/><ellipse cx="13.8" cy="16" rx="3.3" ry="2.7" fill="#555"/></svg>
<svg class="a" style="left:11px;top:476px" width="22" height="23"><rect x="0" y="0" width="6" height="22" fill="#555"/><rect x="16" y="0" width="6" height="22" fill="#555"/><path d="M6 6h10M6 15.5h10" stroke="#555" stroke-width="1.8"/><rect x="2" y="3" width="2.4" height="2.4" fill="#fff"/><rect x="17.8" y="3" width="2.4" height="2.4" fill="#fff"/><rect x="2" y="8" width="2.4" height="2.4" fill="#fff"/><rect x="17.8" y="8" width="2.4" height="2.4" fill="#fff"/><rect x="2" y="12.5" width="2.4" height="2.4" fill="#fff"/><rect x="17.8" y="12.5" width="2.4" height="2.4" fill="#fff"/><rect x="2" y="17" width="2.4" height="2.4" fill="#fff"/><rect x="17.8" y="17" width="2.4" height="2.4" fill="#fff"/></svg>
<div style="left:1594px;top:91px;width:17px;height:944px;background:#f0f0f0;"></div>
<div style="left:1611px;top:91px;width:4px;height:944px;background:#fafafa;"></div>
<div style="left:1602px;top:108px;width:2px;height:549px;background:#808080;"></div>
<div style="left:0;top:0;width:1920px;height:1080px;clip-path:inset(91px 326px 45px 1319px);">
<div style="left:1319px;top:91px;width:275px;height:944px;background:#f5efd6;border-left:1px solid #a2a2aa;border-right:1px solid #a2a2aa;"></div>
<div style="left:1319px;top:91px;width:274px;height:1px;background:#a2a2aa;"></div>
<div style="left:1322px;top:94px;width:269px;height:29px;background:#c38e00;"></div>
<svg class="a" style="left:1325px;top:101px" width="14" height="14"><circle cx="7" cy="7" r="6.3" fill="#fff"/><path d="M3.8 5.6L7 8.8L10.2 5.6" fill="none" stroke="#c38e00" stroke-width="2"/></svg>
<div class="t" style="left:1343px;top:99px;height:20px;line-height:20px;font-size:13px;color:#fbf6e6;font-weight:normal;letter-spacing:0.55px;">Sub1</div>
<div style="left:1319px;top:125px;width:274px;height:1px;background:#a2a2aa;"></div>
<div style="left:1320px;top:126px;width:273px;height:19px;background:#e6e6e6;"></div>
<div style="left:1319px;top:145px;width:274px;height:1px;background:#a2a2aa;"></div>
<div style="left:1419px;top:125px;width:1px;height:20px;background:#a2a2aa;"></div>
<div class="t" style="left:1323px;top:129px;height:18px;line-height:18px;font-size:13px;color:#a4a4a4;font-weight:normal;letter-spacing:0.66px;">Subgraphic ...</div>
<div class="t" style="left:1423px;top:129px;height:18px;line-height:18px;font-size:13px;color:#a4a4a4;font-weight:normal;letter-spacing:0.8px;">platform-03</div>
<div style="left:1320px;top:146px;width:273px;height:132px;background:#f5efd6;"></div>
<div style="left:1419px;top:145px;width:1px;height:133px;background:#a2a2aa;"></div>
<div class="t" style="left:1323px;top:203px;height:18px;line-height:18px;font-size:13px;color:#111;font-weight:normal;letter-spacing:0.55px;">Subgraphic</div>
<div style="left:1420px;top:148px;width:128px;height:128px;background:#4b4b4b;"></div>
<svg class="a" style="left:1420px;top:148px" width="128" height="128" viewBox="1420 148 128 128"><path d="M1443.5 213.0 L1450.0 213.0 L1450.0 238.0 L1443.5 238.0 Z" fill="#5a4a38"/><path d="M1470.0 232.0 L1477.5 232.0 L1477.5 261.0 L1470.0 261.0 Z" fill="#5a4a38"/><path d="M1520.0 224.0 L1526.0 224.0 L1526.0 248.0 L1520.0 248.0 Z" fill="#5a4a38"/><path d="M1494.0 200.0 L1499.0 200.0 L1499.0 222.0 L1494.0 222.0 Z" fill="#5a4a38"/><path d="M1433.5 205.0 L1490.0 190.0 L1534.0 215.0 L1472.5 235.0 L1472.5 241.0 L1433.5 211.0 Z" fill="#4e4133"/><path d="M1472.5 235.0 L1534.0 215.0 L1534.0 221.0 L1472.5 241.0 Z" fill="#5b4634"/><path d="M1433.5 205.0 L1490.0 190.0 L1534.0 215.0 L1472.5 235.0 Z" fill="#6e5d48"/><path d="M1447.6 201.2L1487.9 230.0" stroke="#4d4033" stroke-width="1"/><path d="M1461.8 197.5L1503.2 225.0" stroke="#4d4033" stroke-width="1"/><path d="M1475.9 193.8L1518.6 220.0" stroke="#4d4033" stroke-width="1"/><path d="M1437.0 174.0 L1443.0 174.0 L1443.0 210.0 L1437.0 210.0 Z" fill="#65543f"/><path d="M1495.0 160.0 L1500.0 160.0 L1500.0 193.0 L1495.0 193.0 Z" fill="#65543f"/><path d="M1526.0 186.0 L1531.0 186.0 L1531.0 220.0 L1526.0 220.0 Z" fill="#65543f"/><path d="M1470.0 202.0 L1476.0 202.0 L1476.0 233.0 L1470.0 233.0 Z" fill="#65543f"/><path d="M1441 182 Q1452 204 1472 205" fill="none" stroke="#6a5a45" stroke-width="1.5"/><path d="M1498 168 Q1508 190 1528 190" fill="none" stroke="#6a5a45" stroke-width="1.5"/></svg>
<svg class="a" style="left:1564px;top:231px" width="28" height="28"><rect x="0" y="0" width="28" height="28" rx="4" fill="#fff"/><path d="M2.5 5.5L4 4H9.5L11 5.5V6.5H23.5L25 8V21.5L23.5 23H14L12.5 25L11 23H4L2.5 21.5Z" fill="#555"/><text x="5" y="19" font-family="Liberation Sans" font-weight="bold" font-size="12.5" fill="#fff" letter-spacing="-0.8">3D</text><path d="M23 13V19.5H15.5" fill="none" stroke="#fff" stroke-width="2.6"/><path d="M23 13V19.5H15.5" fill="none" stroke="#555" stroke-width="1.3"/><path d="M18 16.5L15 19.5L18 22.5" fill="none" stroke="#555" stroke-width="1.4"/></svg>
<svg class="a" style="left:1576px;top:261px" width="14" height="12"><path d="M1 6h11M7 1.5L12 6L7 10.5" fill="none" stroke="#a0a0a0" stroke-width="1.6"/></svg>
<div style="left:1319px;top:278px;width:274px;height:1px;background:#a2a2aa;"></div>
<div style="left:1320px;top:279px;width:273px;height:19px;background:#f5efd6;"></div>
<div style="left:1319px;top:298px;width:274px;height:1px;background:#a2a2aa;"></div>
<div style="left:1419px;top:278px;width:1px;height:20px;background:#a2a2aa;"></div>
<div class="t" style="left:1323px;top:282px;height:18px;line-height:18px;font-size:13px;color:#111;font-weight:normal;letter-spacing:0.66px;">Attach Node</div>
<div class="t" style="left:1423px;top:282px;height:18px;line-height:18px;font-size:13px;color:#111;font-weight:normal;letter-spacing:0.8px;">_root</div>
<svg class="a" style="left:1576px;top:283px" width="14" height="12"><path d="M1 6h11M7 1.5L12 6L7 10.5" fill="none" stroke="#a0a0a0" stroke-width="1.6"/></svg>
<div style="left:1320px;top:299px;width:273px;height:19px;background:#f5efd6;"></div>
<div style="left:1319px;top:318px;width:274px;height:1px;background:#a2a2aa;"></div>
<div style="left:1419px;top:298px;width:1px;height:20px;background:#a2a2aa;"></div>
<div class="t" style="left:1323px;top:302px;height:18px;line-height:18px;font-size:13px;color:#111;font-weight:normal;letter-spacing:0.66px;">Apply Positi...</div>
<svg class="a" style="left:1424px;top:301px" width="32" height="16"><rect x="0" y="0" width="32" height="16" rx="8" fill="#6b6b6b"/><circle cx="8" cy="8" r="6.3" fill="#d2d2d2"/></svg>
<div style="left:1320px;top:319px;width:273px;height:19px;background:#f5efd6;"></div>
<div style="left:1319px;top:338px;width:274px;height:1px;background:#a2a2aa;"></div>
<div style="left:1419px;top:318px;width:1px;height:20px;background:#a2a2aa;"></div>
<div class="t" style="left:1323px;top:322px;height:18px;line-height:18px;font-size:13px;color:#111;font-weight:normal;letter-spacing:0.66px;">Relative Co...</div>
<div class="t" style="left:1423px;top:322px;height:18px;line-height:18px;font-size:13px;color:#111;font-weight:normal;letter-spacing:0.8px;">0</div>
<svg class="a" style="left:1577px;top:322px" width="14" height="14"><circle cx="7" cy="7" r="6.9" fill="#a2a2a6"/><path d="M3.6 6.2L7 2.6L10.4 6.2Z M3.6 7.8L7 11.4L10.4 7.8Z" fill="#f8f3de"/></svg>
<div style="left:1320px;top:339px;width:273px;height:19px;background:#f5efd6;"></div>
<div style="left:1319px;top:358px;width:274px;height:1px;background:#a2a2aa;"></div>
<div style="left:1419px;top:338px;width:1px;height:20px;background:#a2a2aa;"></div>
<div class="t" style="left:1323px;top:342px;height:18px;line-height:18px;font-size:13px;color:#111;font-weight:normal;letter-spacing:0.66px;">Relative Co...</div>
<div class="t" style="left:1423px;top:342px;height:18px;line-height:18px;font-size:13px;color:#111;font-weight:normal;letter-spacing:0.8px;">0.85</div>
<svg class="a" style="left:1577px;top:342px" width="14" height="14"><circle cx="7" cy="7" r="6.9" fill="#a2a2a6"/><path d="M3.6 6.2L7 2.6L10.4 6.2Z M3.6 7.8L7 11.4L10.4 7.8Z" fill="#f8f3de"/></svg>
<div style="left:1320px;top:359px;width:273px;height:19px;background:#f5efd6;"></div>
<div style="left:1319px;top:378px;width:274px;height:1px;background:#a2a2aa;"></div>
<div style="left:1419px;top:358px;width:1px;height:20px;background:#a2a2aa;"></div>
<div class="t" style="left:1323px;top:362px;height:18px;line-height:18px;font-size:13px;color:#111;font-weight:normal;letter-spacing:0.66px;">Relative Co...</div>
<div class="t" style="left:1423px;top:362px;height:18px;line-height:18px;font-size:13px;color:#111;font-weight:normal;letter-spacing:0.8px;">0</div>
<svg class="a" style="left:1577px;top:362px" width="14" height="14"><circle cx="7" cy="7" r="6.9" fill="#a2a2a6"/><path d="M3.6 6.2L7 2.6L10.4 6.2Z M3.6 7.8L7 11.4L10.4 7.8Z" fill="#f8f3de"/></svg>
<div style="left:1320px;top:379px;width:273px;height:19px;background:#f5efd6;"></div>
<div style="left:1319px;top:398px;width:274px;height:1px;background:#a2a2aa;"></div>
<div style="left:1419px;top:378px;width:1px;height:20px;background:#a2a2aa;"></div>
<div class="t" style="left:1323px;top:382px;height:18px;line-height:18px;font-size:13px;color:#111;font-weight:normal;letter-spacing:0.66px;">Relative An...</div>
<div class="t" style="left:1423px;top:382px;height:18px;line-height:18px;font-size:13px;color:#111;font-weight:normal;letter-spacing:0.8px;">0</div>
<svg class="a" style="left:1577px;top:382px" width="14" height="14"><circle cx="7" cy="7" r="6.9" fill="#a2a2a6"/><path d="M3.6 6.2L7 2.6L10.4 6.2Z M3.6 7.8L7 11.4L10.4 7.8Z" fill="#f8f3de"/></svg>
<div style="left:1320px;top:399px;width:273px;height:19px;background:#f5efd6;"></div>
<div style="left:1319px;top:418px;width:274px;height:1px;background:#a2a2aa;"></div>
<div style="left:1419px;top:398px;width:1px;height:20px;background:#a2a2aa;"></div>
<div class="t" style="left:1323px;top:402px;height:18px;line-height:18px;font-size:13px;color:#111;font-weight:normal;letter-spacing:0.66px;">Relative An...</div>
<div class="t" style="left:1423px;top:402px;height:18px;line-height:18px;font-size:13px;color:#111;font-weight:normal;letter-spacing:0.8px;">0</div>
<svg class="a" style="left:1577px;top:402px" width="14" height="14"><circle cx="7" cy="7" r="6.9" fill="#a2a2a6"/><path d="M3.6 6.2L7 2.6L10.4 6.2Z M3.6 7.8L7 11.4L10.4 7.8Z" fill="#f8f3de"/></svg>
<div style="left:1320px;top:419px;width:273px;height:19px;background:#f5efd6;"></div>
<div style="left:1319px;top:438px;width:274px;height:1px;background:#a2a2aa;"></div>
<div style="left:1419px;top:418px;width:1px;height:20px;background:#a2a2aa;"></div>
<div class="t" style="left:1323px;top:422px;height:18px;line-height:18px;font-size:13px;color:#111;font-weight:normal;letter-spacing:0.66px;">Relative An...</div>
<div class="t" style="left:1423px;top:422px;height:18px;line-height:18px;font-size:13px;color:#111;font-weight:normal;letter-spacing:0.8px;">0</div>
<svg class="a" style="left:1577px;top:422px" width="14" height="14"><circle cx="7" cy="7" r="6.9" fill="#a2a2a6"/><path d="M3.6 6.2L7 2.6L10.4 6.2Z M3.6 7.8L7 11.4L10.4 7.8Z" fill="#f8f3de"/></svg>
<div style="left:1320px;top:439px;width:273px;height:19px;background:#f5efd6;"></div>
<div style="left:1319px;top:458px;width:274px;height:1px;background:#a2a2aa;"></div>
<div style="left:1419px;top:438px;width:1px;height:20px;background:#a2a2aa;"></div>
<div class="t" style="left:1323px;top:442px;height:18px;line-height:18px;font-size:13px;color:#111;font-weight:normal;letter-spacing:0.66px;">Scale X</div>
<div class="t" style="left:1423px;top:442px;height:18px;line-height:18px;font-size:13px;color:#111;font-weight:normal;letter-spacing:0.8px;">1</div>
<svg class="a" style="left:1577px;top:442px" width="14" height="14"><circle cx="7" cy="7" r="6.9" fill="#a2a2a6"/><path d="M3.6 6.2L7 2.6L10.4 6.2Z M3.6 7.8L7 11.4L10.4 7.8Z" fill="#f8f3de"/></svg>
<div style="left:1320px;top:459px;width:273px;height:19px;background:#f5efd6;"></div>
<div style="left:1319px;top:478px;width:274px;height:1px;background:#a2a2aa;"></div>
<div style="left:1419px;top:458px;width:1px;height:20px;background:#a2a2aa;"></div>
<div class="t" style="left:1323px;top:462px;height:18px;line-height:18px;font-size:13px;color:#111;font-weight:normal;letter-spacing:0.66px;">Scale Y</div>
<div class="t" style="left:1423px;top:462px;height:18px;line-height:18px;font-size:13px;color:#111;font-weight:normal;letter-spacing:0.8px;">1</div>
<svg class="a" style="left:1577px;top:462px" width="14" height="14"><circle cx="7" cy="7" r="6.9" fill="#a2a2a6"/><path d="M3.6 6.2L7 2.6L10.4 6.2Z M3.6 7.8L7 11.4L10.4 7.8Z" fill="#f8f3de"/></svg>
<div style="left:1320px;top:479px;width:273px;height:19px;background:#f5efd6;"></div>
<div style="left:1319px;top:498px;width:274px;height:1px;background:#a2a2aa;"></div>
<div style="left:1419px;top:478px;width:1px;height:20px;background:#a2a2aa;"></div>
<div class="t" style="left:1323px;top:482px;height:18px;line-height:18px;font-size:13px;color:#111;font-weight:normal;letter-spacing:0.66px;">Scale Z</div>
<div class="t" style="left:1423px;top:482px;height:18px;line-height:18px;font-size:13px;color:#111;font-weight:normal;letter-spacing:0.8px;">1</div>
<svg class="a" style="left:1577px;top:482px" width="14" height="14"><circle cx="7" cy="7" r="6.9" fill="#a2a2a6"/><path d="M3.6 6.2L7 2.6L10.4 6.2Z M3.6 7.8L7 11.4L10.4 7.8Z" fill="#f8f3de"/></svg>
<div style="left:1322px;top:501px;width:269px;height:29px;background:#c38e00;"></div>
<svg class="a" style="left:1325px;top:508px" width="14" height="14"><circle cx="7" cy="7" r="6.3" fill="#fff"/><path d="M3.8 5.6L7 8.8L10.2 5.6" fill="none" stroke="#c38e00" stroke-width="2"/></svg>
<div class="t" style="left:1343px;top:506px;height:20px;line-height:20px;font-size:13px;color:#fbf6e6;font-weight:normal;letter-spacing:0.55px;">Linked to Local Light (Only when us...</div>
<div style="left:1319px;top:532px;width:274px;height:1px;background:#a2a2aa;"></div>
<div style="left:1320px;top:533px;width:273px;height:19px;background:#f5efd6;"></div>
<div style="left:1319px;top:552px;width:274px;height:1px;background:#a2a2aa;"></div>
<div style="left:1419px;top:532px;width:1px;height:20px;background:#a2a2aa;"></div>
<div class="t" style="left:1323px;top:536px;height:18px;line-height:18px;font-size:13px;color:#111;font-weight:normal;letter-spacing:0.66px;">Use</div>
<svg class="a" style="left:1424px;top:535px" width="32" height="16"><rect x="0" y="0" width="32" height="16" rx="8" fill="#6b6b6b"/><circle cx="8" cy="8" r="6.3" fill="#d2d2d2"/></svg>
<div style="left:1320px;top:553px;width:273px;height:19px;background:#f5efd6;"></div>
<div style="left:1319px;top:572px;width:274px;height:1px;background:#a2a2aa;"></div>
<div style="left:1419px;top:552px;width:1px;height:20px;background:#a2a2aa;"></div>
<div class="t" style="left:1323px;top:556px;height:18px;line-height:18px;font-size:13px;color:#111;font-weight:normal;letter-spacing:0.66px;">Color</div>
<div style="left:1420px;top:553px;width:173px;height:19px;background:#fff;"></div>
<div class="t" style="left:1423px;top:554px;height:18px;line-height:18px;font-size:13px;color:#111;font-weight:normal;letter-spacing:0.55px;">FFFFFFFF</div>
<svg class="a" style="left:1576px;top:556px" width="14" height="12"><path d="M1 6h11M7 1.5L12 6L7 10.5" fill="none" stroke="#a0a0a0" stroke-width="1.6"/></svg>
<div style="left:1320px;top:573px;width:273px;height:19px;background:#f5efd6;"></div>
<div style="left:1319px;top:592px;width:274px;height:1px;background:#a2a2aa;"></div>
<div style="left:1419px;top:572px;width:1px;height:20px;background:#a2a2aa;"></div>
<div class="t" style="left:1323px;top:576px;height:18px;line-height:18px;font-size:13px;color:#111;font-weight:normal;letter-spacing:0.66px;">Intensity</div>
<div class="t" style="left:1423px;top:576px;height:18px;line-height:18px;font-size:13px;color:#111;font-weight:normal;letter-spacing:0.8px;">0</div>
<svg class="a" style="left:1577px;top:576px" width="14" height="14"><circle cx="7" cy="7" r="6.9" fill="#a2a2a6"/><path d="M3.6 6.2L7 2.6L10.4 6.2Z M3.6 7.8L7 11.4L10.4 7.8Z" fill="#f8f3de"/></svg>
<div style="left:1320px;top:593px;width:273px;height:19px;background:#f5efd6;"></div>
<div style="left:1319px;top:612px;width:274px;height:1px;background:#a2a2aa;"></div>
<div style="left:1419px;top:592px;width:1px;height:20px;background:#a2a2aa;"></div>
<div class="t" style="left:1323px;top:596px;height:18px;line-height:18px;font-size:13px;color:#111;font-weight:normal;letter-spacing:0.66px;">Radius</div>
<div class="t" style="left:1423px;top:596px;height:18px;line-height:18px;font-size:13px;color:#111;font-weight:normal;letter-spacing:0.8px;">5</div>
<svg class="a" style="left:1577px;top:596px" width="14" height="14"><circle cx="7" cy="7" r="6.9" fill="#a2a2a6"/><path d="M3.6 6.2L7 2.6L10.4 6.2Z M3.6 7.8L7 11.4L10.4 7.8Z" fill="#f8f3de"/></svg>
<div style="left:1319px;top:613px;width:274px;height:1px;background:#a2a2aa;"></div>
<div style="left:1322px;top:616px;width:269px;height:29px;background:#c38e00;"></div>
<svg class="a" style="left:1325px;top:623px" width="14" height="14"><circle cx="7" cy="7" r="6.3" fill="#fff"/><path d="M3.8 5.6L7 8.8L10.2 5.6" fill="none" stroke="#c38e00" stroke-width="2"/></svg>
<div class="t" style="left:1343px;top:621px;height:20px;line-height:20px;font-size:13px;color:#fbf6e6;font-weight:normal;letter-spacing:0.55px;">Sub2</div>
<div style="left:1319px;top:647px;width:274px;height:1px;background:#a2a2aa;"></div>
<div style="left:1320px;top:648px;width:273px;height:19px;background:#e6e6e6;"></div>
<div style="left:1319px;top:667px;width:274px;height:1px;background:#a2a2aa;"></div>
<div style="left:1419px;top:647px;width:1px;height:20px;background:#a2a2aa;"></div>
<div class="t" style="left:1323px;top:651px;height:18px;line-height:18px;font-size:13px;color:#a4a4a4;font-weight:normal;letter-spacing:0.66px;">Subgraphic ...</div>
<div class="t" style="left:1423px;top:651px;height:18px;line-height:18px;font-size:13px;color:#a4a4a4;font-weight:normal;letter-spacing:0.8px;">wooden-plank-04</div>
<div style="left:1320px;top:668px;width:273px;height:132px;background:#f5efd6;"></div>
<div style="left:1419px;top:667px;width:1px;height:133px;background:#a2a2aa;"></div>
<div class="t" style="left:1323px;top:725px;height:18px;line-height:18px;font-size:13px;color:#111;font-weight:normal;letter-spacing:0.55px;">Subgraphic</div>
<div style="left:1420px;top:670px;width:128px;height:128px;background:#4b4b4b;"></div>
<svg class="a" style="left:1420px;top:670px" width="128" height="128" viewBox="1420 670 128 128"><path d="M1426.0 740.0 L1540.0 712.0 L1543.5 716.0 L1543.5 728.0 L1431.5 756.0 L1426.0 752.0 Z" fill="#63523e"/><path d="M1426.0 740.0 L1540.0 712.0 L1543.5 716.0 L1430.0 745.0 Z" fill="#72604a"/><path d="M1431 746 L1543 718" stroke="#4a3d30" stroke-width="0.9"/><path d="M1426.0 740.0 L1430.0 745.0 L1431.5 756.0 L1426.0 752.0 Z" fill="#6d4b33"/></svg>
<svg class="a" style="left:1564px;top:753px" width="28" height="28"><rect x="0" y="0" width="28" height="28" rx="4" fill="#fff"/><path d="M2.5 5.5L4 4H9.5L11 5.5V6.5H23.5L25 8V21.5L23.5 23H14L12.5 25L11 23H4L2.5 21.5Z" fill="#555"/><text x="5" y="19" font-family="Liberation Sans" font-weight="bold" font-size="12.5" fill="#fff" letter-spacing="-0.8">3D</text><path d="M23 13V19.5H15.5" fill="none" stroke="#fff" stroke-width="2.6"/><path d="M23 13V19.5H15.5" fill="none" stroke="#555" stroke-width="1.3"/><path d="M18 16.5L15 19.5L18 22.5" fill="none" stroke="#555" stroke-width="1.4"/></svg>
<svg class="a" style="left:1576px;top:783px" width="14" height="12"><path d="M1 6h11M7 1.5L12 6L7 10.5" fill="none" stroke="#a0a0a0" stroke-width="1.6"/></svg>
<div style="left:1319px;top:800px;width:274px;height:1px;background:#a2a2aa;"></div>
<div style="left:1320px;top:801px;width:273px;height:19px;background:#f5efd6;"></div>
<div style="left:1319px;top:820px;width:274px;height:1px;background:#a2a2aa;"></div>
<div style="left:1419px;top:800px;width:1px;height:20px;background:#a2a2aa;"></div>
<div class="t" style="left:1323px;top:804px;height:18px;line-height:18px;font-size:13px;color:#111;font-weight:normal;letter-spacing:0.66px;">Attach Node</div>
<div class="t" style="left:1423px;top:804px;height:18px;line-height:18px;font-size:13px;color:#111;font-weight:normal;letter-spacing:0.8px;">_root</div>
<svg class="a" style="left:1576px;top:805px" width="14" height="12"><path d="M1 6h11M7 1.5L12 6L7 10.5" fill="none" stroke="#a0a0a0" stroke-width="1.6"/></svg>
<div style="left:1320px;top:821px;width:273px;height:19px;background:#f5efd6;"></div>
<div style="left:1319px;top:840px;width:274px;height:1px;background:#a2a2aa;"></div>
<div style="left:1419px;top:820px;width:1px;height:20px;background:#a2a2aa;"></div>
<div class="t" style="left:1323px;top:824px;height:18px;line-height:18px;font-size:13px;color:#111;font-weight:normal;letter-spacing:0.66px;">Apply Positi...</div>
<svg class="a" style="left:1424px;top:823px" width="32" height="16"><rect x="0" y="0" width="32" height="16" rx="8" fill="#6b6b6b"/><circle cx="8" cy="8" r="6.3" fill="#d2d2d2"/></svg>
<div style="left:1320px;top:841px;width:273px;height:19px;background:#f5efd6;"></div>
<div style="left:1319px;top:860px;width:274px;height:1px;background:#a2a2aa;"></div>
<div style="left:1419px;top:840px;width:1px;height:20px;background:#a2a2aa;"></div>
<div class="t" style="left:1323px;top:844px;height:18px;line-height:18px;font-size:13px;color:#111;font-weight:normal;letter-spacing:0.66px;">Relative Co...</div>
<div class="t" style="left:1423px;top:844px;height:18px;line-height:18px;font-size:13px;color:#111;font-weight:normal;letter-spacing:0.8px;">0.74</div>
<svg class="a" style="left:1577px;top:844px" width="14" height="14"><circle cx="7" cy="7" r="6.9" fill="#a2a2a6"/><path d="M3.6 6.2L7 2.6L10.4 6.2Z M3.6 7.8L7 11.4L10.4 7.8Z" fill="#f8f3de"/></svg>
<div style="left:1320px;top:861px;width:273px;height:19px;background:#f5efd6;"></div>
<div style="left:1319px;top:880px;width:274px;height:1px;background:#a2a2aa;"></div>
<div style="left:1419px;top:860px;width:1px;height:20px;background:#a2a2aa;"></div>
<div class="t" style="left:1323px;top:864px;height:18px;line-height:18px;font-size:13px;color:#111;font-weight:normal;letter-spacing:0.66px;">Relative Co...</div>
<div class="t" style="left:1423px;top:864px;height:18px;line-height:18px;font-size:13px;color:#111;font-weight:normal;letter-spacing:0.8px;">0</div>
<svg class="a" style="left:1577px;top:864px" width="14" height="14"><circle cx="7" cy="7" r="6.9" fill="#a2a2a6"/><path d="M3.6 6.2L7 2.6L10.4 6.2Z M3.6 7.8L7 11.4L10.4 7.8Z" fill="#f8f3de"/></svg>
<div style="left:1320px;top:881px;width:273px;height:19px;background:#f5efd6;"></div>
<div style="left:1319px;top:900px;width:274px;height:1px;background:#a2a2aa;"></div>
<div style="left:1419px;top:880px;width:1px;height:20px;background:#a2a2aa;"></div>
<div class="t" style="left:1323px;top:884px;height:18px;line-height:18px;font-size:13px;color:#111;font-weight:normal;letter-spacing:0.66px;">Relative Co...</div>
<div class="t" style="left:1423px;top:884px;height:18px;line-height:18px;font-size:13px;color:#111;font-weight:normal;letter-spacing:0.8px;">0</div>
<svg class="a" style="left:1577px;top:884px" width="14" height="14"><circle cx="7" cy="7" r="6.9" fill="#a2a2a6"/><path d="M3.6 6.2L7 2.6L10.4 6.2Z M3.6 7.8L7 11.4L10.4 7.8Z" fill="#f8f3de"/></svg>
<div style="left:1320px;top:901px;width:273px;height:19px;background:#f5efd6;"></div>
<div style="left:1319px;top:920px;width:274px;height:1px;background:#a2a2aa;"></div>
<div style="left:1419px;top:900px;width:1px;height:20px;background:#a2a2aa;"></div>
<div class="t" style="left:1323px;top:904px;height:18px;line-height:18px;font-size:13px;color:#111;font-weight:normal;letter-spacing:0.66px;">Relative An...</div>
<div class="t" style="left:1423px;top:904px;height:18px;line-height:18px;font-size:13px;color:#111;font-weight:normal;letter-spacing:0.8px;">0</div>
<svg class="a" style="left:1577px;top:904px" width="14" height="14"><circle cx="7" cy="7" r="6.9" fill="#a2a2a6"/><path d="M3.6 6.2L7 2.6L10.4 6.2Z M3.6 7.8L7 11.4L10.4 7.8Z" fill="#f8f3de"/></svg>
<div style="left:1320px;top:921px;width:273px;height:19px;background:#f5efd6;"></div>
<div style="left:1319px;top:940px;width:274px;height:1px;background:#a2a2aa;"></div>
<div style="left:1419px;top:920px;width:1px;height:20px;background:#a2a2aa;"></div>
<div class="t" style="left:1323px;top:924px;height:18px;line-height:18px;font-size:13px;color:#111;font-weight:normal;letter-spacing:0.66px;">Relative An...</div>
<div class="t" style="left:1423px;top:924px;height:18px;line-height:18px;font-size:13px;color:#111;font-weight:normal;letter-spacing:0.8px;">90</div>
<svg class="a" style="left:1577px;top:924px" width="14" height="14"><circle cx="7" cy="7" r="6.9" fill="#a2a2a6"/><path d="M3.6 6.2L7 2.6L10.4 6.2Z M3.6 7.8L7 11.4L10.4 7.8Z" fill="#f8f3de"/></svg>
<div style="left:1320px;top:941px;width:273px;height:19px;background:#f5efd6;"></div>
<div style="left:1319px;top:960px;width:274px;height:1px;background:#a2a2aa;"></div>
<div style="left:1419px;top:940px;width:1px;height:20px;background:#a2a2aa;"></div>
<div class="t" style="left:1323px;top:944px;height:18px;line-height:18px;font-size:13px;color:#111;font-weight:normal;letter-spacing:0.66px;">Relative An...</div>
<div class="t" style="left:1423px;top:944px;height:18px;line-height:18px;font-size:13px;color:#111;font-weight:normal;letter-spacing:0.8px;">0</div>
<svg class="a" style="left:1577px;top:944px" width="14" height="14"><circle cx="7" cy="7" r="6.9" fill="#a2a2a6"/><path d="M3.6 6.2L7 2.6L10.4 6.2Z M3.6 7.8L7 11.4L10.4 7.8Z" fill="#f8f3de"/></svg>
<div style="left:1320px;top:961px;width:273px;height:19px;background:#f5efd6;"></div>
<div style="left:1319px;top:980px;width:274px;height:1px;background:#a2a2aa;"></div>
<div style="left:1419px;top:960px;width:1px;height:20px;background:#a2a2aa;"></div>
<div class="t" style="left:1323px;top:964px;height:18px;line-height:18px;font-size:13px;color:#111;font-weight:normal;letter-spacing:0.66px;">Scale X</div>
<div class="t" style="left:1423px;top:964px;height:18px;line-height:18px;font-size:13px;color:#111;font-weight:normal;letter-spacing:0.8px;">1</div>
<svg class="a" style="left:1577px;top:964px" width="14" height="14"><circle cx="7" cy="7" r="6.9" fill="#a2a2a6"/><path d="M3.6 6.2L7 2.6L10.4 6.2Z M3.6 7.8L7 11.4L10.4 7.8Z" fill="#f8f3de"/></svg>
<div style="left:1320px;top:981px;width:273px;height:19px;background:#f5efd6;"></div>
<div style="left:1319px;top:1000px;width:274px;height:1px;background:#a2a2aa;"></div>
<div style="left:1419px;top:980px;width:1px;height:20px;background:#a2a2aa;"></div>
<div class="t" style="left:1323px;top:984px;height:18px;line-height:18px;font-size:13px;color:#111;font-weight:normal;letter-spacing:0.66px;">Scale Y</div>
<div class="t" style="left:1423px;top:984px;height:18px;line-height:18px;font-size:13px;color:#111;font-weight:normal;letter-spacing:0.8px;">1.2</div>
<svg class="a" style="left:1577px;top:984px" width="14" height="14"><circle cx="7" cy="7" r="6.9" fill="#a2a2a6"/><path d="M3.6 6.2L7 2.6L10.4 6.2Z M3.6 7.8L7 11.4L10.4 7.8Z" fill="#f8f3de"/></svg>
<div style="left:1320px;top:1001px;width:273px;height:19px;background:#f5efd6;"></div>
<div style="left:1319px;top:1020px;width:274px;height:1px;background:#a2a2aa;"></div>
<div style="left:1419px;top:1000px;width:1px;height:20px;background:#a2a2aa;"></div>
<div class="t" style="left:1323px;top:1004px;height:18px;line-height:18px;font-size:13px;color:#111;font-weight:normal;letter-spacing:0.66px;">Scale Z</div>
<div class="t" style="left:1423px;top:1004px;height:18px;line-height:18px;font-size:13px;color:#111;font-weight:normal;letter-spacing:0.8px;">1.2</div>
<svg class="a" style="left:1577px;top:1004px" width="14" height="14"><circle cx="7" cy="7" r="6.9" fill="#a2a2a6"/><path d="M3.6 6.2L7 2.6L10.4 6.2Z M3.6 7.8L7 11.4L10.4 7.8Z" fill="#f8f3de"/></svg>
<div style="left:1322px;top:1023px;width:269px;height:29px;background:#c38e00;"></div>
<svg class="a" style="left:1325px;top:1030px" width="14" height="14"><circle cx="7" cy="7" r="6.3" fill="#fff"/><path d="M3.8 5.6L7 8.8L10.2 5.6" fill="none" stroke="#c38e00" stroke-width="2"/></svg>
<div class="t" style="left:1343px;top:1028px;height:20px;line-height:20px;font-size:13px;color:#fbf6e6;font-weight:normal;letter-spacing:0.55px;">Linked to Local Light (Only when us...</div>
</div>
<div style="left:1615px;top:55px;width:300px;height:20px;background:#c38e00;"></div>
<div class="t" style="left:1621px;top:57px;height:18px;line-height:18px;font-size:13px;color:#fbf6e6;font-weight:normal;letter-spacing:0.55px;">Name</div>
<div style="left:1615px;top:75px;width:300px;height:1px;background:#a2a2aa;"></div>
<div style="left:1615px;top:76px;width:300px;height:19px;background:#f5efd6;border-left:1px solid #a2a2aa;border-right:1px solid #a2a2aa;"></div>
<div class="t" style="left:1619px;top:78px;height:18px;line-height:18px;font-size:13px;color:#111;font-weight:normal;letter-spacing:0.6px;">elevation-02_E</div>
<svg class="a" style="left:1898px;top:79px" width="15" height="15"><path d="M9 1.5l4.5 4.5l-7 7l-4 0.8l0.8-4z" fill="#9a9a9a"/><path d="M2.5 13.5l2.5-0.6l-1.9-1.9z" fill="#f5efd6"/></svg>
<div style="left:1615px;top:95px;width:300px;height:2px;background:#a2a2aa;"></div>
<div style="left:1898px;top:97px;width:17px;height:938px;background:#f0f0f0;"></div>
<div style="left:1906px;top:113px;width:2px;height:824px;background:#808080;"></div>
<div style="left:0;top:0;width:1920px;height:1080px;clip-path:inset(97px 22px 45px 1615px);">
<div style="left:1615px;top:97px;width:283px;height:938px;background:#f5efd6;border-left:1px solid #a2a2aa;border-right:1px solid #a2a2aa;"></div>
<div style="left:1618px;top:99px;width:277px;height:29px;background:#c38e00;"></div>
<svg class="a" style="left:1621px;top:106px" width="14" height="14"><circle cx="7" cy="7" r="6.3" fill="#fff"/><path d="M3.8 5.6L7 8.8L10.2 5.6" fill="none" stroke="#c38e00" stroke-width="2"/></svg>
<div class="t" style="left:1639px;top:104px;height:20px;line-height:20px;font-size:13px;color:#fbf6e6;font-weight:normal;letter-spacing:0.55px;">Basic</div>
<div style="left:1615px;top:130px;width:282px;height:1px;background:#a2a2aa;"></div>
<div style="left:1616px;top:131px;width:281px;height:19px;background:#e6e6e6;"></div>
<div style="left:1615px;top:150px;width:282px;height:1px;background:#a2a2aa;"></div>
<div style="left:1715px;top:130px;width:1px;height:20px;background:#a2a2aa;"></div>
<div class="t" style="left:1619px;top:134px;height:18px;line-height:18px;font-size:13px;color:#a4a4a4;font-weight:normal;letter-spacing:0.66px;">Graphic Name</div>
<div class="t" style="left:1719px;top:134px;height:18px;line-height:18px;font-size:13px;color:#a4a4a4;font-weight:normal;letter-spacing:0.8px;">elevation-02</div>
<div style="left:1715px;top:150px;width:1px;height:133px;background:#a2a2aa;"></div>
<div class="t" style="left:1619px;top:209px;height:18px;line-height:18px;font-size:13px;color:#111;font-weight:normal;letter-spacing:0.55px;">Graphic</div>
<div style="left:1716px;top:153px;width:128px;height:128px;background:#4b4b4b;"></div>
<svg class="a" style="left:1716px;top:153px" width="128" height="128" viewBox="1716 153 128 128"><path d="M1724.0 189.0 L1731.5 192.0 L1731.5 234.0 L1724.0 231.0 Z" fill="#7f6a50"/><path d="M1731.5 192.0 L1739.0 189.0 L1739.0 231.0 L1731.5 234.0 Z" fill="#6a5844"/><path d="M1724.0 189.0 L1731.5 186.0 L1739.0 189.0 L1731.5 192.0 Z" fill="#9a6f4e"/><path d="M1758.0 219.0 L1765.5 222.0 L1765.5 264.0 L1758.0 261.0 Z" fill="#7f6a50"/><path d="M1765.5 222.0 L1773.0 219.0 L1773.0 261.0 L1765.5 264.0 Z" fill="#6a5844"/><path d="M1758.0 219.0 L1765.5 216.0 L1773.0 219.0 L1765.5 222.0 Z" fill="#9a6f4e"/><path d="M1787.0 173.0 L1794.5 176.0 L1794.5 218.0 L1787.0 215.0 Z" fill="#7f6a50"/><path d="M1794.5 176.0 L1802.0 173.0 L1802.0 215.0 L1794.5 218.0 Z" fill="#6a5844"/><path d="M1787.0 173.0 L1794.5 170.0 L1802.0 173.0 L1794.5 176.0 Z" fill="#9a6f4e"/><path d="M1821.0 203.0 L1828.5 206.0 L1828.5 247.0 L1821.0 244.0 Z" fill="#7f6a50"/><path d="M1828.5 206.0 L1836.0 203.0 L1836.0 244.0 L1828.5 247.0 Z" fill="#6a5844"/><path d="M1821.0 203.0 L1828.5 200.0 L1836.0 203.0 L1828.5 206.0 Z" fill="#9a6f4e"/><circle cx="1727" cy="193" r="1.6" fill="#222"/><circle cx="1733" cy="194" r="1.6" fill="#222"/><circle cx="1761" cy="223" r="1.6" fill="#222"/><circle cx="1768" cy="224" r="1.6" fill="#222"/><circle cx="1790" cy="177" r="1.6" fill="#222"/><circle cx="1797" cy="178" r="1.6" fill="#222"/><circle cx="1824" cy="207" r="1.6" fill="#222"/><circle cx="1831" cy="208" r="1.6" fill="#222"/></svg>
<svg class="a" style="left:1868px;top:236px" width="28" height="28"><rect x="0" y="0" width="28" height="28" rx="2" fill="#fff"/><path d="M9.5 1.5H19.5V15.5L15.5 20.5H5.5V13.5H3L2 12.5V9L3 8H5.5V5.5Z" fill="#fff" stroke="#555" stroke-width="2" stroke-linejoin="round"/><path d="M14.5 5.5L19.5 1.5V15.5L14.5 20Z" fill="#555"/><path d="M5.5 5.5L9.5 1.5H19.5L14.5 5.5Z" fill="#fff" stroke="#555" stroke-width="1.6"/><rect x="9.5" y="7.5" width="2.2" height="2.2" fill="#555"/><path d="M7 13.5H12" stroke="#555" stroke-width="1.8"/><path d="M25.5 10V19.5H14.5" fill="none" stroke="#555" stroke-width="2.4"/><path d="M18 16L14 19.5L18 23" fill="none" stroke="#555" stroke-width="2.2"/></svg>
<svg class="a" style="left:1880px;top:268px" width="14" height="12"><path d="M1 6h11M7 1.5L12 6L7 10.5" fill="none" stroke="#a0a0a0" stroke-width="1.6"/></svg>
<div style="left:1615px;top:283px;width:282px;height:1px;background:#a2a2aa;"></div>
<div style="left:1616px;top:284px;width:281px;height:19px;background:#f5efd6;"></div>
<div style="left:1615px;top:303px;width:282px;height:1px;background:#a2a2aa;"></div>
<div style="left:1715px;top:283px;width:1px;height:20px;background:#a2a2aa;"></div>
<div class="t" style="left:1619px;top:287px;height:18px;line-height:18px;font-size:13px;color:#111;font-weight:normal;letter-spacing:0.66px;">Subgraphic</div>
<svg class="a" style="left:1719px;top:286px" width="32" height="16"><rect x="0" y="0" width="32" height="16" rx="8" fill="#6b6b6b"/><circle cx="24" cy="8" r="6.3" fill="#fff"/><rect x="23" y="4.5" width="2" height="7" fill="#555"/></svg>
<div style="left:1616px;top:304px;width:281px;height:19px;background:#f5efd6;"></div>
<div style="left:1615px;top:323px;width:282px;height:1px;background:#a2a2aa;"></div>
<div style="left:1715px;top:303px;width:1px;height:20px;background:#a2a2aa;"></div>
<div class="t" style="left:1619px;top:307px;height:18px;line-height:18px;font-size:13px;color:#111;font-weight:normal;letter-spacing:0.66px;">Accurate C...</div>
<svg class="a" style="left:1719px;top:306px" width="32" height="16"><rect x="0" y="0" width="32" height="16" rx="8" fill="#6b6b6b"/><circle cx="8" cy="8" r="6.3" fill="#d2d2d2"/></svg>
<div style="left:1616px;top:324px;width:281px;height:19px;background:#f5efd6;"></div>
<div style="left:1615px;top:343px;width:282px;height:1px;background:#a2a2aa;"></div>
<div style="left:1715px;top:323px;width:1px;height:20px;background:#a2a2aa;"></div>
<div class="t" style="left:1619px;top:327px;height:18px;line-height:18px;font-size:13px;color:#111;font-weight:normal;letter-spacing:0.66px;">Overwrite N...</div>
<svg class="a" style="left:1719px;top:326px" width="32" height="16"><rect x="0" y="0" width="32" height="16" rx="8" fill="#6b6b6b"/><circle cx="24" cy="8" r="6.3" fill="#fff"/><rect x="23" y="4.5" width="2" height="7" fill="#555"/></svg>
<div style="left:1618px;top:346px;width:277px;height:29px;background:#c38e00;"></div>
<svg class="a" style="left:1621px;top:353px" width="14" height="14"><circle cx="7" cy="7" r="6.3" fill="#fff"/><path d="M3.8 5.6L7 8.8L10.2 5.6" fill="none" stroke="#c38e00" stroke-width="2"/></svg>
<div class="t" style="left:1639px;top:351px;height:20px;line-height:20px;font-size:13px;color:#fbf6e6;font-weight:normal;letter-spacing:0.55px;">Simple Collision Settings</div>
<div style="left:1615px;top:377px;width:282px;height:1px;background:#a2a2aa;"></div>
<div style="left:1616px;top:378px;width:281px;height:19px;background:#f5efd6;"></div>
<div style="left:1615px;top:397px;width:282px;height:1px;background:#a2a2aa;"></div>
<div style="left:1715px;top:377px;width:1px;height:20px;background:#a2a2aa;"></div>
<div class="t" style="left:1619px;top:381px;height:18px;line-height:18px;font-size:13px;color:#111;font-weight:normal;letter-spacing:0.66px;">Shape</div>
<div class="t" style="left:1719px;top:381px;height:18px;line-height:18px;font-size:13px;color:#111;font-weight:normal;letter-spacing:0.8px;">Mesh</div>
<svg class="a" style="left:1880px;top:380px" width="14" height="14"><rect x="0" y="0" width="14" height="14" rx="2" fill="#a8a8a8"/><path d="M2.5 4.5h9L7 10z" fill="#f0f0f0"/></svg>
<div style="left:1616px;top:398px;width:281px;height:19px;background:#f5efd6;"></div>
<div style="left:1615px;top:417px;width:282px;height:1px;background:#a2a2aa;"></div>
<div style="left:1715px;top:397px;width:1px;height:20px;background:#a2a2aa;"></div>
<div class="t" style="left:1619px;top:401px;height:18px;line-height:18px;font-size:13px;color:#111;font-weight:normal;letter-spacing:0.66px;">Capsule Axis</div>
<div class="t" style="left:1719px;top:401px;height:18px;line-height:18px;font-size:13px;color:#111;font-weight:normal;letter-spacing:0.8px;">Y</div>
<svg class="a" style="left:1880px;top:400px" width="14" height="14"><rect x="0" y="0" width="14" height="14" rx="2" fill="#a8a8a8"/><path d="M2.5 4.5h9L7 10z" fill="#f0f0f0"/></svg>
<div style="left:1616px;top:418px;width:281px;height:19px;background:#e6e6e6;"></div>
<div style="left:1615px;top:437px;width:282px;height:1px;background:#a2a2aa;"></div>
<div style="left:1715px;top:417px;width:1px;height:20px;background:#a2a2aa;"></div>
<div class="t" style="left:1619px;top:421px;height:18px;line-height:18px;font-size:13px;color:#a4a4a4;font-weight:normal;letter-spacing:0.66px;">Mesh Model...</div>
<div class="t" style="left:1719px;top:421px;height:18px;line-height:18px;font-size:13px;color:#a4a4a4;font-weight:normal;letter-spacing:0.8px;">elevation-02-mesh</div>
<div style="left:1715px;top:437px;width:1px;height:133px;background:#a2a2aa;"></div>
<div class="t" style="left:1619px;top:496px;height:18px;line-height:18px;font-size:13px;color:#111;font-weight:normal;letter-spacing:0.55px;">Mesh</div>
<div style="left:1716px;top:440px;width:128px;height:128px;background:#4b4b4b;"></div>
<svg class="a" style="left:1716px;top:440px" width="128" height="128" viewBox="1716 440 128 128"><path d="M1724.0 476.0 L1731.5 479.0 L1731.5 521.0 L1724.0 518.0 Z" fill="#ffffff"/><path d="M1731.5 479.0 L1739.0 476.0 L1739.0 518.0 L1731.5 521.0 Z" fill="#ffffff"/><path d="M1724.0 476.0 L1731.5 473.0 L1739.0 476.0 L1731.5 479.0 Z" fill="#ffffff"/><path d="M1758.0 506.0 L1765.5 509.0 L1765.5 551.0 L1758.0 548.0 Z" fill="#ffffff"/><path d="M1765.5 509.0 L1773.0 506.0 L1773.0 548.0 L1765.5 551.0 Z" fill="#ffffff"/><path d="M1758.0 506.0 L1765.5 503.0 L1773.0 506.0 L1765.5 509.0 Z" fill="#ffffff"/><path d="M1787.0 460.0 L1794.5 463.0 L1794.5 505.0 L1787.0 502.0 Z" fill="#ffffff"/><path d="M1794.5 463.0 L1802.0 460.0 L1802.0 502.0 L1794.5 505.0 Z" fill="#ffffff"/><path d="M1787.0 460.0 L1794.5 457.0 L1802.0 460.0 L1794.5 463.0 Z" fill="#ffffff"/><path d="M1821.0 490.0 L1828.5 493.0 L1828.5 534.0 L1821.0 531.0 Z" fill="#ffffff"/><path d="M1828.5 493.0 L1836.0 490.0 L1836.0 531.0 L1828.5 534.0 Z" fill="#ffffff"/><path d="M1821.0 490.0 L1828.5 487.0 L1836.0 490.0 L1828.5 493.0 Z" fill="#ffffff"/></svg>
<svg class="a" style="left:1868px;top:523px" width="28" height="28"><rect x="0" y="0" width="28" height="28" rx="2" fill="#fff"/><path d="M9.5 1.5H19.5V15.5L15.5 20.5H5.5V13.5H3L2 12.5V9L3 8H5.5V5.5Z" fill="#fff" stroke="#555" stroke-width="2" stroke-linejoin="round"/><path d="M14.5 5.5L19.5 1.5V15.5L14.5 20Z" fill="#555"/><path d="M5.5 5.5L9.5 1.5H19.5L14.5 5.5Z" fill="#fff" stroke="#555" stroke-width="1.6"/><rect x="9.5" y="7.5" width="2.2" height="2.2" fill="#555"/><path d="M7 13.5H12" stroke="#555" stroke-width="1.8"/><path d="M25.5 10V19.5H14.5" fill="none" stroke="#555" stroke-width="2.4"/><path d="M18 16L14 19.5L18 23" fill="none" stroke="#555" stroke-width="2.2"/></svg>
<svg class="a" style="left:1880px;top:555px" width="14" height="12"><path d="M1 6h11M7 1.5L12 6L7 10.5" fill="none" stroke="#a0a0a0" stroke-width="1.6"/></svg>
<div style="left:1615px;top:570px;width:282px;height:1px;background:#a2a2aa;"></div>
<div style="left:1616px;top:571px;width:281px;height:19px;background:#f5efd6;"></div>
<div style="left:1615px;top:590px;width:282px;height:1px;background:#a2a2aa;"></div>
<div style="left:1715px;top:570px;width:1px;height:20px;background:#a2a2aa;"></div>
<div class="t" style="left:1619px;top:574px;height:18px;line-height:18px;font-size:13px;color:#111;font-weight:normal;letter-spacing:0.66px;">Position X</div>
<div class="t" style="left:1719px;top:574px;height:18px;line-height:18px;font-size:13px;color:#111;font-weight:normal;letter-spacing:0.8px;">0</div>
<svg class="a" style="left:1881px;top:574px" width="14" height="14"><circle cx="7" cy="7" r="6.9" fill="#a2a2a6"/><path d="M3.6 6.2L7 2.6L10.4 6.2Z M3.6 7.8L7 11.4L10.4 7.8Z" fill="#f8f3de"/></svg>
<div style="left:1616px;top:591px;width:281px;height:19px;background:#f5efd6;"></div>
<div style="left:1615px;top:610px;width:282px;height:1px;background:#a2a2aa;"></div>
<div style="left:1715px;top:590px;width:1px;height:20px;background:#a2a2aa;"></div>
<div class="t" style="left:1619px;top:594px;height:18px;line-height:18px;font-size:13px;color:#111;font-weight:normal;letter-spacing:0.66px;">Position Y</div>
<div class="t" style="left:1719px;top:594px;height:18px;line-height:18px;font-size:13px;color:#111;font-weight:normal;letter-spacing:0.8px;">0</div>
<svg class="a" style="left:1881px;top:594px" width="14" height="14"><circle cx="7" cy="7" r="6.9" fill="#a2a2a6"/><path d="M3.6 6.2L7 2.6L10.4 6.2Z M3.6 7.8L7 11.4L10.4 7.8Z" fill="#f8f3de"/></svg>
<div style="left:1616px;top:611px;width:281px;height:19px;background:#f5efd6;"></div>
<div style="left:1615px;top:630px;width:282px;height:1px;background:#a2a2aa;"></div>
<div style="left:1715px;top:610px;width:1px;height:20px;background:#a2a2aa;"></div>
<div class="t" style="left:1619px;top:614px;height:18px;line-height:18px;font-size:13px;color:#111;font-weight:normal;letter-spacing:0.66px;">Position Z</div>
<div class="t" style="left:1719px;top:614px;height:18px;line-height:18px;font-size:13px;color:#111;font-weight:normal;letter-spacing:0.8px;">0</div>
<svg class="a" style="left:1881px;top:614px" width="14" height="14"><circle cx="7" cy="7" r="6.9" fill="#a2a2a6"/><path d="M3.6 6.2L7 2.6L10.4 6.2Z M3.6 7.8L7 11.4L10.4 7.8Z" fill="#f8f3de"/></svg>
<div style="left:1616px;top:631px;width:281px;height:19px;background:#f5efd6;"></div>
<div style="left:1615px;top:650px;width:282px;height:1px;background:#a2a2aa;"></div>
<div style="left:1715px;top:630px;width:1px;height:20px;background:#a2a2aa;"></div>
<div class="t" style="left:1619px;top:634px;height:18px;line-height:18px;font-size:13px;color:#111;font-weight:normal;letter-spacing:0.66px;">Rotation X</div>
<div class="t" style="left:1719px;top:634px;height:18px;line-height:18px;font-size:13px;color:#111;font-weight:normal;letter-spacing:0.8px;">0</div>
<svg class="a" style="left:1881px;top:634px" width="14" height="14"><circle cx="7" cy="7" r="6.9" fill="#a2a2a6"/><path d="M3.6 6.2L7 2.6L10.4 6.2Z M3.6 7.8L7 11.4L10.4 7.8Z" fill="#f8f3de"/></svg>
<div style="left:1616px;top:651px;width:281px;height:19px;background:#f5efd6;"></div>
<div style="left:1615px;top:670px;width:282px;height:1px;background:#a2a2aa;"></div>
<div style="left:1715px;top:650px;width:1px;height:20px;background:#a2a2aa;"></div>
<div class="t" style="left:1619px;top:654px;height:18px;line-height:18px;font-size:13px;color:#111;font-weight:normal;letter-spacing:0.66px;">Rotation Y</div>
<div class="t" style="left:1719px;top:654px;height:18px;line-height:18px;font-size:13px;color:#111;font-weight:normal;letter-spacing:0.8px;">0</div>
<svg class="a" style="left:1881px;top:654px" width="14" height="14"><circle cx="7" cy="7" r="6.9" fill="#a2a2a6"/><path d="M3.6 6.2L7 2.6L10.4 6.2Z M3.6 7.8L7 11.4L10.4 7.8Z" fill="#f8f3de"/></svg>
<div style="left:1616px;top:671px;width:281px;height:19px;background:#f5efd6;"></div>
<div style="left:1615px;top:690px;width:282px;height:1px;background:#a2a2aa;"></div>
<div style="left:1715px;top:670px;width:1px;height:20px;background:#a2a2aa;"></div>
<div class="t" style="left:1619px;top:674px;height:18px;line-height:18px;font-size:13px;color:#111;font-weight:normal;letter-spacing:0.66px;">Rotation Z</div>
<div class="t" style="left:1719px;top:674px;height:18px;line-height:18px;font-size:13px;color:#111;font-weight:normal;letter-spacing:0.8px;">0</div>
<svg class="a" style="left:1881px;top:674px" width="14" height="14"><circle cx="7" cy="7" r="6.9" fill="#a2a2a6"/><path d="M3.6 6.2L7 2.6L10.4 6.2Z M3.6 7.8L7 11.4L10.4 7.8Z" fill="#f8f3de"/></svg>
<div style="left:1616px;top:691px;width:281px;height:19px;background:#f5efd6;"></div>
<div style="left:1615px;top:710px;width:282px;height:1px;background:#a2a2aa;"></div>
<div style="left:1715px;top:690px;width:1px;height:20px;background:#a2a2aa;"></div>
<div class="t" style="left:1619px;top:694px;height:18px;line-height:18px;font-size:13px;color:#111;font-weight:normal;letter-spacing:0.66px;">Size X</div>
<div class="t" style="left:1719px;top:694px;height:18px;line-height:18px;font-size:13px;color:#111;font-weight:normal;letter-spacing:0.8px;">1</div>
<svg class="a" style="left:1881px;top:694px" width="14" height="14"><circle cx="7" cy="7" r="6.9" fill="#a2a2a6"/><path d="M3.6 6.2L7 2.6L10.4 6.2Z M3.6 7.8L7 11.4L10.4 7.8Z" fill="#f8f3de"/></svg>
<div style="left:1616px;top:711px;width:281px;height:19px;background:#f5efd6;"></div>
<div style="left:1615px;top:730px;width:282px;height:1px;background:#a2a2aa;"></div>
<div style="left:1715px;top:710px;width:1px;height:20px;background:#a2a2aa;"></div>
<div class="t" style="left:1619px;top:714px;height:18px;line-height:18px;font-size:13px;color:#111;font-weight:normal;letter-spacing:0.66px;">Size Y</div>
<div class="t" style="left:1719px;top:714px;height:18px;line-height:18px;font-size:13px;color:#111;font-weight:normal;letter-spacing:0.8px;">1</div>
<svg class="a" style="left:1881px;top:714px" width="14" height="14"><circle cx="7" cy="7" r="6.9" fill="#a2a2a6"/><path d="M3.6 6.2L7 2.6L10.4 6.2Z M3.6 7.8L7 11.4L10.4 7.8Z" fill="#f8f3de"/></svg>
<div style="left:1616px;top:731px;width:281px;height:19px;background:#f5efd6;"></div>
<div style="left:1615px;top:750px;width:282px;height:1px;background:#a2a2aa;"></div>
<div style="left:1715px;top:730px;width:1px;height:20px;background:#a2a2aa;"></div>
<div class="t" style="left:1619px;top:734px;height:18px;line-height:18px;font-size:13px;color:#111;font-weight:normal;letter-spacing:0.66px;">Size Z</div>
<div class="t" style="left:1719px;top:734px;height:18px;line-height:18px;font-size:13px;color:#111;font-weight:normal;letter-spacing:0.8px;">1</div>
<svg class="a" style="left:1881px;top:734px" width="14" height="14"><circle cx="7" cy="7" r="6.9" fill="#a2a2a6"/><path d="M3.6 6.2L7 2.6L10.4 6.2Z M3.6 7.8L7 11.4L10.4 7.8Z" fill="#f8f3de"/></svg>
<div style="left:1618px;top:753px;width:277px;height:29px;background:#c38e00;"></div>
<svg class="a" style="left:1621px;top:760px" width="14" height="14"><circle cx="7" cy="7" r="6.3" fill="#fff"/><path d="M3.8 5.6L7 8.8L10.2 5.6" fill="none" stroke="#c38e00" stroke-width="2"/></svg>
<div class="t" style="left:1639px;top:758px;height:20px;line-height:20px;font-size:13px;color:#fbf6e6;font-weight:normal;letter-spacing:0.55px;">Motion Setting</div>
<div style="left:1615px;top:784px;width:282px;height:1px;background:#a2a2aa;"></div>
<div style="left:1616px;top:785px;width:281px;height:19px;background:#e6e6e6;"></div>
<div style="left:1615px;top:804px;width:282px;height:1px;background:#a2a2aa;"></div>
<div style="left:1715px;top:784px;width:1px;height:20px;background:#a2a2aa;"></div>
<div class="t" style="left:1619px;top:788px;height:18px;line-height:18px;font-size:13px;color:#a4a4a4;font-weight:normal;letter-spacing:0.66px;">Motion Name</div>
<div style="left:1715px;top:804px;width:1px;height:133px;background:#a2a2aa;"></div>
<div class="t" style="left:1619px;top:863px;height:18px;line-height:18px;font-size:13px;color:#111;font-weight:normal;letter-spacing:0.55px;">Motion</div>
<svg class="a" style="left:1880px;top:922px" width="14" height="12"><path d="M1 6h11M7 1.5L12 6L7 10.5" fill="none" stroke="#a0a0a0" stroke-width="1.6"/></svg>
<div style="left:1615px;top:937px;width:282px;height:1px;background:#a2a2aa;"></div>
<div style="left:1618px;top:940px;width:277px;height:29px;background:#c38e00;"></div>
<svg class="a" style="left:1621px;top:947px" width="14" height="14"><circle cx="7" cy="7" r="6.3" fill="#fff"/><path d="M3.8 5.6L7 8.8L10.2 5.6" fill="none" stroke="#c38e00" stroke-width="2"/></svg>
<div class="t" style="left:1639px;top:945px;height:20px;line-height:20px;font-size:13px;color:#fbf6e6;font-weight:normal;letter-spacing:0.55px;">Materials Used</div>
<div style="left:1615px;top:971px;width:282px;height:1px;background:#a2a2aa;"></div>
<div style="left:1616px;top:972px;width:281px;height:20px;background:#e6e6e6;"></div>
<div style="left:1615px;top:992px;width:282px;height:1px;background:#a2a2aa;"></div>
<div style="left:1715px;top:971px;width:1px;height:21px;background:#a2a2aa;"></div>
<div class="t" style="left:1619px;top:975px;height:18px;line-height:18px;font-size:13px;color:#a4a4a4;font-weight:normal;letter-spacing:0.66px;">Material Na...</div>
<div class="t" style="left:1719px;top:975px;height:18px;line-height:18px;font-size:13px;color:#a4a4a4;font-weight:normal;letter-spacing:0.8px;">platforms-all</div>
<div style="left:1715px;top:992px;width:1px;height:60px;background:#a2a2aa;"></div>
<div style="left:1716px;top:995px;width:128px;height:128px;background:#4b4b4b;"></div>
<svg class="a" style="left:1716px;top:995px" width="128" height="128" viewBox="1716 995 128 128"><ellipse cx="1780" cy="1058" rx="30" ry="36" fill="#5b4a38"/><ellipse cx="1780" cy="1062" rx="25" ry="32" fill="#3f3a35"/><path d="M1753 1040 Q1780 1016 1807 1040" fill="none" stroke="#7a6347" stroke-width="2"/></svg>
</div>
</body></html>
